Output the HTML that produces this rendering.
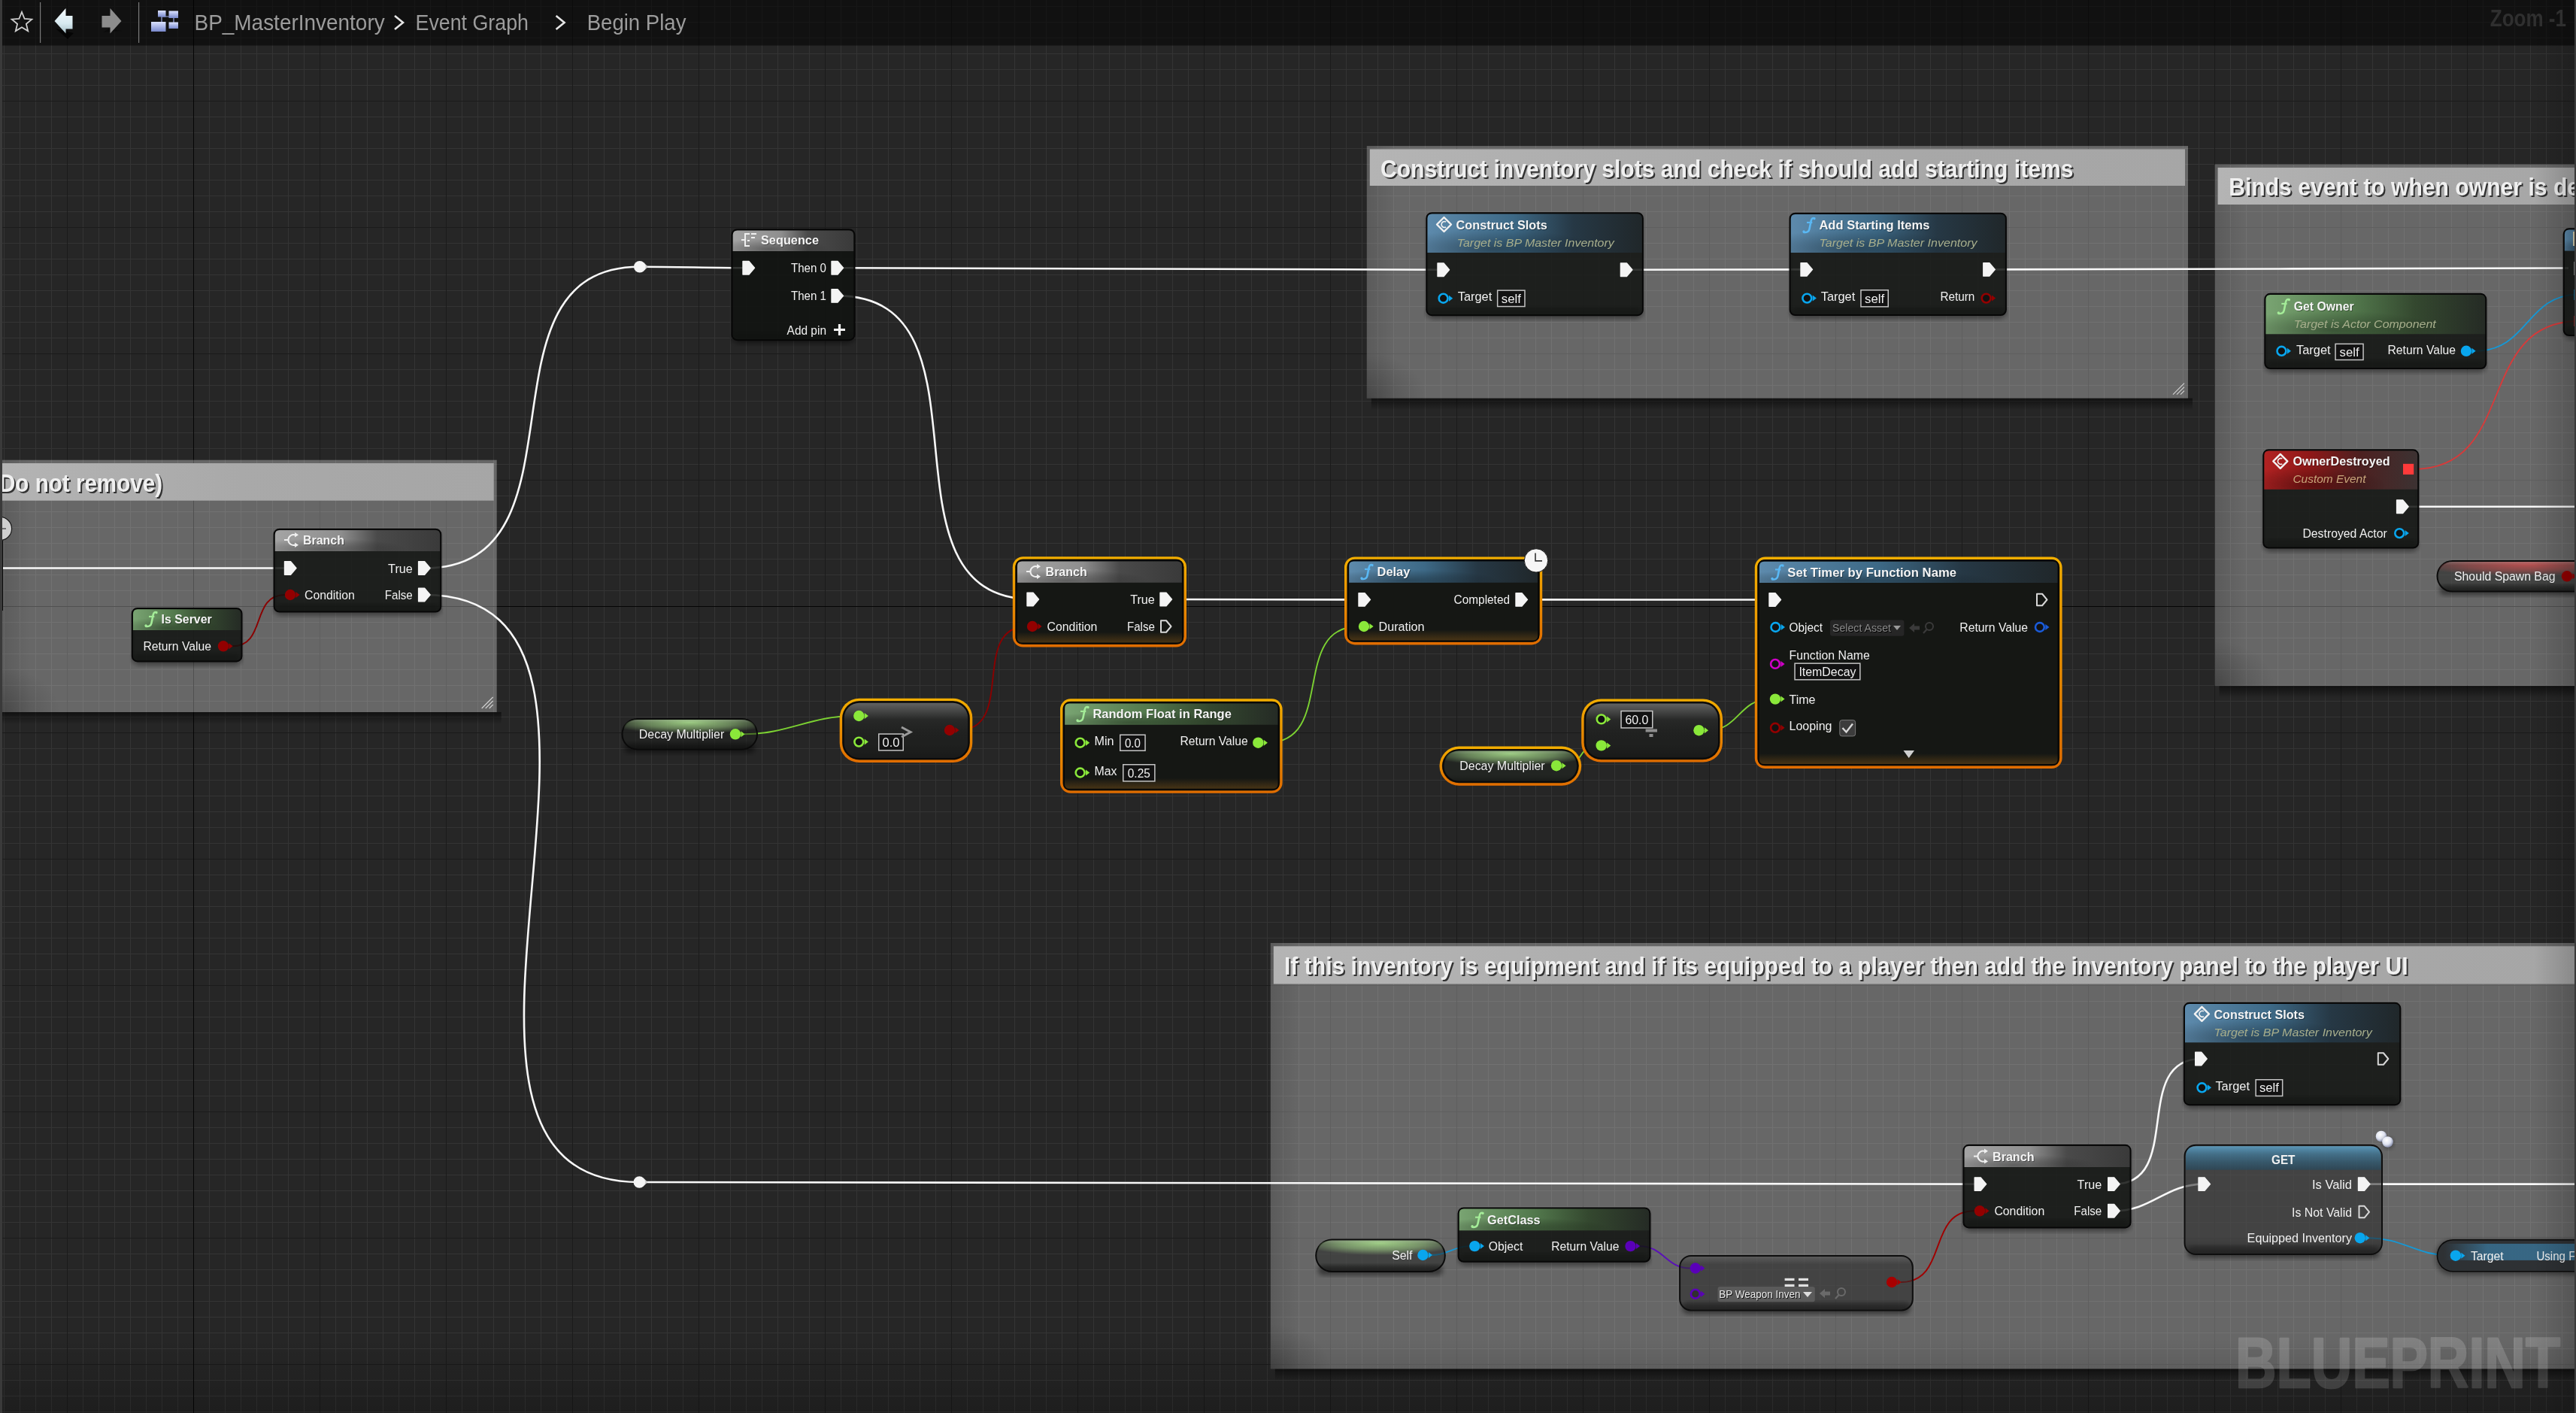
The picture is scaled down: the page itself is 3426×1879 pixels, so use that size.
<!DOCTYPE html>
<html><head><meta charset="utf-8"><style>
html,body{margin:0;padding:0;background:#262626;overflow:hidden;width:3426px;height:1879px}
svg{display:block;will-change:transform}
text{font-family:"Liberation Sans",sans-serif}
</style></head><body>
<svg width="3426" height="1879" viewBox="0 0 3426 1879"><defs><filter id="blur4" x="-10%" y="-10%" width="120%" height="130%"><feGaussianBlur stdDeviation="3"/></filter><linearGradient id="lg1" x1="0" y1="0" x2="0" y2="1"><stop offset="0" stop-color="#000000" stop-opacity="0.55"/><stop offset="1" stop-color="#000000" stop-opacity="0"/></linearGradient><linearGradient id="lg2" x1="0" y1="0" x2="1" y2="0"><stop offset="0" stop-color="#000000" stop-opacity="0.12"/><stop offset="1" stop-color="#000000" stop-opacity="0"/></linearGradient><radialGradient id="rg3" cx="0" cy="1" r="0.5"><stop offset="0" stop-color="#000000" stop-opacity="0.22"/><stop offset="1" stop-color="#000000" stop-opacity="0"/></radialGradient><linearGradient id="lg4" x1="0" y1="0" x2="1" y2="0"><stop offset="0" stop-color="#b4b4b4"/><stop offset="0.5" stop-color="#a9a9a9"/><stop offset="1" stop-color="#a6a6a6"/></linearGradient><linearGradient id="lg5" x1="0" y1="0" x2="0" y2="1"><stop offset="0" stop-color="#000000" stop-opacity="0.55"/><stop offset="1" stop-color="#000000" stop-opacity="0"/></linearGradient><linearGradient id="lg6" x1="0" y1="0" x2="1" y2="0"><stop offset="0" stop-color="#000000" stop-opacity="0.12"/><stop offset="1" stop-color="#000000" stop-opacity="0"/></linearGradient><radialGradient id="rg7" cx="0" cy="1" r="0.5"><stop offset="0" stop-color="#000000" stop-opacity="0.22"/><stop offset="1" stop-color="#000000" stop-opacity="0"/></radialGradient><linearGradient id="lg8" x1="0" y1="0" x2="1" y2="0"><stop offset="0" stop-color="#b4b4b4"/><stop offset="0.5" stop-color="#a9a9a9"/><stop offset="1" stop-color="#a6a6a6"/></linearGradient><linearGradient id="lg9" x1="0" y1="0" x2="0" y2="1"><stop offset="0" stop-color="#000000" stop-opacity="0.55"/><stop offset="1" stop-color="#000000" stop-opacity="0"/></linearGradient><linearGradient id="lg10" x1="0" y1="0" x2="1" y2="0"><stop offset="0" stop-color="#000000" stop-opacity="0.12"/><stop offset="1" stop-color="#000000" stop-opacity="0"/></linearGradient><radialGradient id="rg11" cx="0" cy="1" r="0.5"><stop offset="0" stop-color="#000000" stop-opacity="0.22"/><stop offset="1" stop-color="#000000" stop-opacity="0"/></radialGradient><linearGradient id="lg12" x1="0" y1="0" x2="1" y2="0"><stop offset="0" stop-color="#b4b4b4"/><stop offset="0.5" stop-color="#a9a9a9"/><stop offset="1" stop-color="#a6a6a6"/></linearGradient><linearGradient id="lg13" x1="0" y1="0" x2="0" y2="1"><stop offset="0" stop-color="#000000" stop-opacity="0.55"/><stop offset="1" stop-color="#000000" stop-opacity="0"/></linearGradient><linearGradient id="lg14" x1="0" y1="0" x2="1" y2="0"><stop offset="0" stop-color="#000000" stop-opacity="0.12"/><stop offset="1" stop-color="#000000" stop-opacity="0"/></linearGradient><radialGradient id="rg15" cx="0" cy="1" r="0.5"><stop offset="0" stop-color="#000000" stop-opacity="0.22"/><stop offset="1" stop-color="#000000" stop-opacity="0"/></radialGradient><linearGradient id="lg16" x1="0" y1="0" x2="1" y2="0"><stop offset="0" stop-color="#b4b4b4"/><stop offset="0.5" stop-color="#a9a9a9"/><stop offset="1" stop-color="#a6a6a6"/></linearGradient><linearGradient id="lg17" x1="0" y1="0" x2="1" y2="0"><stop offset="0" stop-color="#a4a4a4"/><stop offset="0.4" stop-color="#8e8e8e"/><stop offset="0.62" stop-color="#4a4a4a"/><stop offset="1" stop-color="#3a3a3a"/></linearGradient><radialGradient id="rg18" cx="0.3" cy="0.9" r="0.5"><stop offset="0" stop-color="#000000" stop-opacity="0.35"/><stop offset="1" stop-color="#000000" stop-opacity="0"/></radialGradient><linearGradient id="lg19" x1="0" y1="0" x2="1" y2="0"><stop offset="0" stop-color="#ffffff" stop-opacity="0.45"/><stop offset="1" stop-color="#ffffff" stop-opacity="0.25"/></linearGradient><linearGradient id="lg20" x1="0" y1="0" x2="1" y2="0"><stop offset="0" stop-color="#79a472"/><stop offset="0.4" stop-color="#52784c"/><stop offset="0.68" stop-color="#34482f"/><stop offset="1" stop-color="#252b25"/></linearGradient><radialGradient id="rg21" cx="0.3" cy="0.9" r="0.5"><stop offset="0" stop-color="#000000" stop-opacity="0.35"/><stop offset="1" stop-color="#000000" stop-opacity="0"/></radialGradient><linearGradient id="lg22" x1="0" y1="0" x2="1" y2="0"><stop offset="0" stop-color="#ffffff" stop-opacity="0.45"/><stop offset="1" stop-color="#ffffff" stop-opacity="0.25"/></linearGradient><linearGradient id="lg23" x1="0" y1="0" x2="1" y2="0"><stop offset="0" stop-color="#a4a4a4"/><stop offset="0.4" stop-color="#8e8e8e"/><stop offset="0.62" stop-color="#4a4a4a"/><stop offset="1" stop-color="#3a3a3a"/></linearGradient><radialGradient id="rg24" cx="0.3" cy="0.9" r="0.5"><stop offset="0" stop-color="#000000" stop-opacity="0.35"/><stop offset="1" stop-color="#000000" stop-opacity="0"/></radialGradient><linearGradient id="lg25" x1="0" y1="0" x2="1" y2="0"><stop offset="0" stop-color="#ffffff" stop-opacity="0.45"/><stop offset="1" stop-color="#ffffff" stop-opacity="0.25"/></linearGradient><linearGradient id="lg26" x1="0" y1="0" x2="0" y2="1"><stop offset="0" stop-color="#f2ae00"/><stop offset="1" stop-color="#e06c00"/></linearGradient><linearGradient id="lg27" x1="0" y1="0" x2="0" y2="1"><stop offset="0" stop-color="#1a1406"/><stop offset="0.7" stop-color="#2a1e0a"/><stop offset="1" stop-color="#3a2408"/></linearGradient><linearGradient id="lg28" x1="0" y1="0" x2="0" y2="1"><stop offset="0" stop-color="#b07018" stop-opacity="0"/><stop offset="1" stop-color="#b07018" stop-opacity="0.32"/></linearGradient><linearGradient id="lg29" x1="0" y1="0" x2="1" y2="0"><stop offset="0" stop-color="#a4a4a4"/><stop offset="0.4" stop-color="#8e8e8e"/><stop offset="0.62" stop-color="#4a4a4a"/><stop offset="1" stop-color="#3a3a3a"/></linearGradient><radialGradient id="rg30" cx="0.3" cy="0.9" r="0.5"><stop offset="0" stop-color="#000000" stop-opacity="0.35"/><stop offset="1" stop-color="#000000" stop-opacity="0"/></radialGradient><linearGradient id="lg31" x1="0" y1="0" x2="1" y2="0"><stop offset="0" stop-color="#ffffff" stop-opacity="0.45"/><stop offset="1" stop-color="#ffffff" stop-opacity="0.25"/></linearGradient><radialGradient id="rg32" cx="0.5" cy="0.15" r="0.62"><stop offset="0" stop-color="#a8dc8c" stop-opacity="0.9"/><stop offset="0.55" stop-color="#a8dc8c" stop-opacity="0.5"/><stop offset="1" stop-color="#a8dc8c" stop-opacity="0"/></radialGradient><linearGradient id="lg33" x1="0" y1="0" x2="0" y2="1"><stop offset="0" stop-color="#ffffff" stop-opacity="0.15"/><stop offset="0.12" stop-color="#ffffff" stop-opacity="0"/><stop offset="0.8" stop-color="#000000" stop-opacity="0"/><stop offset="1" stop-color="#000000" stop-opacity="0.25"/></linearGradient><linearGradient id="lg34" x1="0" y1="0" x2="0" y2="1"><stop offset="0" stop-color="#f2ae00"/><stop offset="1" stop-color="#e06c00"/></linearGradient><linearGradient id="lg35" x1="0" y1="0" x2="0" y2="1"><stop offset="0" stop-color="#ffffff" stop-opacity="0.3"/><stop offset="0.3" stop-color="#ffffff" stop-opacity="0.04"/><stop offset="0.75" stop-color="#000000" stop-opacity="0"/><stop offset="1" stop-color="#000000" stop-opacity="0.2"/></linearGradient><linearGradient id="lg36" x1="0" y1="0" x2="0" y2="1"><stop offset="0" stop-color="#f2ae00"/><stop offset="1" stop-color="#e06c00"/></linearGradient><linearGradient id="lg37" x1="0" y1="0" x2="0" y2="1"><stop offset="0" stop-color="#1a1406"/><stop offset="0.7" stop-color="#2a1e0a"/><stop offset="1" stop-color="#3a2408"/></linearGradient><linearGradient id="lg38" x1="0" y1="0" x2="0" y2="1"><stop offset="0" stop-color="#b07018" stop-opacity="0"/><stop offset="1" stop-color="#b07018" stop-opacity="0.32"/></linearGradient><linearGradient id="lg39" x1="0" y1="0" x2="1" y2="0"><stop offset="0" stop-color="#79a472"/><stop offset="0.4" stop-color="#52784c"/><stop offset="0.68" stop-color="#34482f"/><stop offset="1" stop-color="#252b25"/></linearGradient><radialGradient id="rg40" cx="0.3" cy="0.9" r="0.5"><stop offset="0" stop-color="#000000" stop-opacity="0.35"/><stop offset="1" stop-color="#000000" stop-opacity="0"/></radialGradient><linearGradient id="lg41" x1="0" y1="0" x2="1" y2="0"><stop offset="0" stop-color="#ffffff" stop-opacity="0.45"/><stop offset="1" stop-color="#ffffff" stop-opacity="0.25"/></linearGradient><linearGradient id="lg42" x1="0" y1="0" x2="0" y2="1"><stop offset="0" stop-color="#f2ae00"/><stop offset="1" stop-color="#e06c00"/></linearGradient><linearGradient id="lg43" x1="0" y1="0" x2="0" y2="1"><stop offset="0" stop-color="#1a1406"/><stop offset="0.7" stop-color="#2a1e0a"/><stop offset="1" stop-color="#3a2408"/></linearGradient><linearGradient id="lg44" x1="0" y1="0" x2="0" y2="1"><stop offset="0" stop-color="#b07018" stop-opacity="0"/><stop offset="1" stop-color="#b07018" stop-opacity="0.32"/></linearGradient><linearGradient id="lg45" x1="0" y1="0" x2="1" y2="0"><stop offset="0" stop-color="#5d8aac"/><stop offset="0.4" stop-color="#3d6986"/><stop offset="0.68" stop-color="#263845"/><stop offset="1" stop-color="#20272a"/></linearGradient><radialGradient id="rg46" cx="0.3" cy="0.9" r="0.5"><stop offset="0" stop-color="#000000" stop-opacity="0.35"/><stop offset="1" stop-color="#000000" stop-opacity="0"/></radialGradient><linearGradient id="lg47" x1="0" y1="0" x2="1" y2="0"><stop offset="0" stop-color="#ffffff" stop-opacity="0.45"/><stop offset="1" stop-color="#ffffff" stop-opacity="0.25"/></linearGradient><linearGradient id="lg48" x1="0" y1="0" x2="0" y2="1"><stop offset="0" stop-color="#f2ae00"/><stop offset="1" stop-color="#e06c00"/></linearGradient><linearGradient id="lg49" x1="0" y1="0" x2="0" y2="1"><stop offset="0" stop-color="#1a1406"/><stop offset="0.7" stop-color="#2a1e0a"/><stop offset="1" stop-color="#3a2408"/></linearGradient><linearGradient id="lg50" x1="0" y1="0" x2="0" y2="1"><stop offset="0" stop-color="#b07018" stop-opacity="0"/><stop offset="1" stop-color="#b07018" stop-opacity="0.32"/></linearGradient><linearGradient id="lg51" x1="0" y1="0" x2="1" y2="0"><stop offset="0" stop-color="#5d8aac"/><stop offset="0.4" stop-color="#3d6986"/><stop offset="0.68" stop-color="#263845"/><stop offset="1" stop-color="#20272a"/></linearGradient><radialGradient id="rg52" cx="0.3" cy="0.9" r="0.5"><stop offset="0" stop-color="#000000" stop-opacity="0.35"/><stop offset="1" stop-color="#000000" stop-opacity="0"/></radialGradient><linearGradient id="lg53" x1="0" y1="0" x2="1" y2="0"><stop offset="0" stop-color="#ffffff" stop-opacity="0.45"/><stop offset="1" stop-color="#ffffff" stop-opacity="0.25"/></linearGradient><linearGradient id="lg54" x1="0" y1="0" x2="0" y2="1"><stop offset="0" stop-color="#f2ae00"/><stop offset="1" stop-color="#e06c00"/></linearGradient><radialGradient id="rg55" cx="0.5" cy="0.15" r="0.62"><stop offset="0" stop-color="#a8dc8c" stop-opacity="0.9"/><stop offset="0.55" stop-color="#a8dc8c" stop-opacity="0.5"/><stop offset="1" stop-color="#a8dc8c" stop-opacity="0"/></radialGradient><linearGradient id="lg56" x1="0" y1="0" x2="0" y2="1"><stop offset="0" stop-color="#ffffff" stop-opacity="0.15"/><stop offset="0.12" stop-color="#ffffff" stop-opacity="0"/><stop offset="0.8" stop-color="#000000" stop-opacity="0"/><stop offset="1" stop-color="#000000" stop-opacity="0.25"/></linearGradient><linearGradient id="lg57" x1="0" y1="0" x2="0" y2="1"><stop offset="0" stop-color="#f2ae00"/><stop offset="1" stop-color="#e06c00"/></linearGradient><linearGradient id="lg58" x1="0" y1="0" x2="0" y2="1"><stop offset="0" stop-color="#ffffff" stop-opacity="0.3"/><stop offset="0.3" stop-color="#ffffff" stop-opacity="0.04"/><stop offset="0.75" stop-color="#000000" stop-opacity="0"/><stop offset="1" stop-color="#000000" stop-opacity="0.2"/></linearGradient><linearGradient id="lg59" x1="0" y1="0" x2="1" y2="0"><stop offset="0" stop-color="#5d8aac"/><stop offset="0.4" stop-color="#3d6986"/><stop offset="0.68" stop-color="#263845"/><stop offset="1" stop-color="#20272a"/></linearGradient><radialGradient id="rg60" cx="0.3" cy="0.9" r="0.5"><stop offset="0" stop-color="#000000" stop-opacity="0.35"/><stop offset="1" stop-color="#000000" stop-opacity="0"/></radialGradient><linearGradient id="lg61" x1="0" y1="0" x2="1" y2="0"><stop offset="0" stop-color="#ffffff" stop-opacity="0.45"/><stop offset="1" stop-color="#ffffff" stop-opacity="0.25"/></linearGradient><linearGradient id="lg62" x1="0" y1="0" x2="1" y2="0"><stop offset="0" stop-color="#5d8aac"/><stop offset="0.4" stop-color="#3d6986"/><stop offset="0.68" stop-color="#263845"/><stop offset="1" stop-color="#20272a"/></linearGradient><radialGradient id="rg63" cx="0.3" cy="0.9" r="0.5"><stop offset="0" stop-color="#000000" stop-opacity="0.35"/><stop offset="1" stop-color="#000000" stop-opacity="0"/></radialGradient><linearGradient id="lg64" x1="0" y1="0" x2="1" y2="0"><stop offset="0" stop-color="#ffffff" stop-opacity="0.45"/><stop offset="1" stop-color="#ffffff" stop-opacity="0.25"/></linearGradient><linearGradient id="lg65" x1="0" y1="0" x2="1" y2="0"><stop offset="0" stop-color="#79a472"/><stop offset="0.4" stop-color="#52784c"/><stop offset="0.68" stop-color="#34482f"/><stop offset="1" stop-color="#252b25"/></linearGradient><radialGradient id="rg66" cx="0.3" cy="0.9" r="0.5"><stop offset="0" stop-color="#000000" stop-opacity="0.35"/><stop offset="1" stop-color="#000000" stop-opacity="0"/></radialGradient><linearGradient id="lg67" x1="0" y1="0" x2="1" y2="0"><stop offset="0" stop-color="#ffffff" stop-opacity="0.45"/><stop offset="1" stop-color="#ffffff" stop-opacity="0.25"/></linearGradient><linearGradient id="lg68" x1="0" y1="0" x2="1" y2="0"><stop offset="0" stop-color="#5d8aac"/><stop offset="0.4" stop-color="#3d6986"/><stop offset="0.68" stop-color="#263845"/><stop offset="1" stop-color="#20272a"/></linearGradient><radialGradient id="rg69" cx="0.3" cy="0.9" r="0.5"><stop offset="0" stop-color="#000000" stop-opacity="0.35"/><stop offset="1" stop-color="#000000" stop-opacity="0"/></radialGradient><linearGradient id="lg70" x1="0" y1="0" x2="1" y2="0"><stop offset="0" stop-color="#ffffff" stop-opacity="0.45"/><stop offset="1" stop-color="#ffffff" stop-opacity="0.25"/></linearGradient><linearGradient id="lg71" x1="0" y1="0" x2="1" y2="0"><stop offset="0" stop-color="#b22222"/><stop offset="0.3" stop-color="#8e1818"/><stop offset="0.62" stop-color="#4d2020"/><stop offset="1" stop-color="#3c3232"/></linearGradient><radialGradient id="rg72" cx="0.3" cy="0.9" r="0.5"><stop offset="0" stop-color="#000000" stop-opacity="0.35"/><stop offset="1" stop-color="#000000" stop-opacity="0"/></radialGradient><linearGradient id="lg73" x1="0" y1="0" x2="1" y2="0"><stop offset="0" stop-color="#ffffff" stop-opacity="0.45"/><stop offset="1" stop-color="#ffffff" stop-opacity="0.25"/></linearGradient><radialGradient id="rg74" cx="0.5" cy="0.15" r="0.62"><stop offset="0" stop-color="#c05050" stop-opacity="0.9"/><stop offset="0.55" stop-color="#c05050" stop-opacity="0.5"/><stop offset="1" stop-color="#c05050" stop-opacity="0"/></radialGradient><linearGradient id="lg75" x1="0" y1="0" x2="0" y2="1"><stop offset="0" stop-color="#ffffff" stop-opacity="0.15"/><stop offset="0.12" stop-color="#ffffff" stop-opacity="0"/><stop offset="0.8" stop-color="#000000" stop-opacity="0"/><stop offset="1" stop-color="#000000" stop-opacity="0.25"/></linearGradient><linearGradient id="lg76" x1="0" y1="0" x2="1" y2="0"><stop offset="0" stop-color="#5d8aac"/><stop offset="0.4" stop-color="#3d6986"/><stop offset="0.68" stop-color="#263845"/><stop offset="1" stop-color="#20272a"/></linearGradient><radialGradient id="rg77" cx="0.3" cy="0.9" r="0.5"><stop offset="0" stop-color="#000000" stop-opacity="0.35"/><stop offset="1" stop-color="#000000" stop-opacity="0"/></radialGradient><linearGradient id="lg78" x1="0" y1="0" x2="1" y2="0"><stop offset="0" stop-color="#ffffff" stop-opacity="0.45"/><stop offset="1" stop-color="#ffffff" stop-opacity="0.25"/></linearGradient><linearGradient id="lg79" x1="0" y1="0" x2="1" y2="0"><stop offset="0" stop-color="#a4a4a4"/><stop offset="0.4" stop-color="#8e8e8e"/><stop offset="0.62" stop-color="#4a4a4a"/><stop offset="1" stop-color="#3a3a3a"/></linearGradient><radialGradient id="rg80" cx="0.3" cy="0.9" r="0.5"><stop offset="0" stop-color="#000000" stop-opacity="0.35"/><stop offset="1" stop-color="#000000" stop-opacity="0"/></radialGradient><linearGradient id="lg81" x1="0" y1="0" x2="1" y2="0"><stop offset="0" stop-color="#ffffff" stop-opacity="0.45"/><stop offset="1" stop-color="#ffffff" stop-opacity="0.25"/></linearGradient><linearGradient id="lg82" x1="0" y1="0" x2="0" y2="1"><stop offset="0" stop-color="#ffffff" stop-opacity="0.12"/><stop offset="0.15" stop-color="#ffffff" stop-opacity="0"/><stop offset="0.85" stop-color="#000000" stop-opacity="0"/><stop offset="1" stop-color="#000000" stop-opacity="0.25"/></linearGradient><linearGradient id="lg83" x1="0" y1="0" x2="0" y2="1"><stop offset="0" stop-color="#5ab0e0" stop-opacity="0.7"/><stop offset="0.35" stop-color="#3a88b4" stop-opacity="0.55"/><stop offset="1" stop-color="#1c4a66" stop-opacity="0.5"/></linearGradient><linearGradient id="lg84" x1="0" y1="0" x2="1" y2="0"><stop offset="0" stop-color="#ffffff" stop-opacity="0"/><stop offset="0.2" stop-color="#ffffff" stop-opacity="0.5"/><stop offset="0.8" stop-color="#ffffff" stop-opacity="0.5"/><stop offset="1" stop-color="#ffffff" stop-opacity="0"/></linearGradient><radialGradient id="rg85" cx="0.4" cy="0.35" r="0.65"><stop offset="0" stop-color="#ffffff"/><stop offset="0.6" stop-color="#dfe3f0"/><stop offset="1" stop-color="#8a92b0"/></radialGradient><linearGradient id="lg86" x1="0" y1="0" x2="1" y2="0"><stop offset="0" stop-color="#3d8ab8" stop-opacity="0"/><stop offset="0.25" stop-color="#3d8ab8" stop-opacity="0.6"/><stop offset="1" stop-color="#3d8ab8" stop-opacity="0.6"/></linearGradient><radialGradient id="rg87" cx="0.5" cy="0.15" r="0.62"><stop offset="0" stop-color="#a8dc8c" stop-opacity="0.9"/><stop offset="0.55" stop-color="#a8dc8c" stop-opacity="0.5"/><stop offset="1" stop-color="#a8dc8c" stop-opacity="0"/></radialGradient><linearGradient id="lg88" x1="0" y1="0" x2="0" y2="1"><stop offset="0" stop-color="#ffffff" stop-opacity="0.15"/><stop offset="0.12" stop-color="#ffffff" stop-opacity="0"/><stop offset="0.8" stop-color="#000000" stop-opacity="0"/><stop offset="1" stop-color="#000000" stop-opacity="0.25"/></linearGradient><linearGradient id="lg89" x1="0" y1="0" x2="1" y2="0"><stop offset="0" stop-color="#79a472"/><stop offset="0.4" stop-color="#52784c"/><stop offset="0.68" stop-color="#34482f"/><stop offset="1" stop-color="#252b25"/></linearGradient><radialGradient id="rg90" cx="0.3" cy="0.9" r="0.5"><stop offset="0" stop-color="#000000" stop-opacity="0.35"/><stop offset="1" stop-color="#000000" stop-opacity="0"/></radialGradient><linearGradient id="lg91" x1="0" y1="0" x2="1" y2="0"><stop offset="0" stop-color="#ffffff" stop-opacity="0.45"/><stop offset="1" stop-color="#ffffff" stop-opacity="0.25"/></linearGradient><linearGradient id="lg92" x1="0" y1="0" x2="0" y2="1"><stop offset="0" stop-color="#ffffff" stop-opacity="0.12"/><stop offset="0.15" stop-color="#ffffff" stop-opacity="0"/><stop offset="0.85" stop-color="#000000" stop-opacity="0"/><stop offset="1" stop-color="#000000" stop-opacity="0.25"/></linearGradient><linearGradient id="lg93" x1="0" y1="0" x2="0" y2="1"><stop offset="0" stop-color="#000000" stop-opacity="0"/><stop offset="1" stop-color="#000000" stop-opacity="0.22"/></linearGradient><linearGradient id="lg94" x1="0" y1="0" x2="1" y2="0"><stop offset="0" stop-color="#000000" stop-opacity="0"/><stop offset="1" stop-color="#000000" stop-opacity="0.18"/></linearGradient><linearGradient id="lg95" x1="0" y1="0" x2="0" y2="1"><stop offset="0" stop-color="#f4fbff"/><stop offset="0.6" stop-color="#d8eaf0"/><stop offset="1" stop-color="#a8c0c8"/></linearGradient><linearGradient id="lg96" x1="0" y1="0" x2="0" y2="1"><stop offset="0" stop-color="#dbe2ff"/><stop offset="1" stop-color="#7888cc"/></linearGradient></defs><rect x="0" y="0" width="3426" height="1879" fill="#262626"/>
<path d="M5.5 0V1879M26.5 0V1879M47.5 0V1879M68.5 0V1879M110.5 0V1879M131.5 0V1879M152.5 0V1879M173.5 0V1879M194.5 0V1879M215.5 0V1879M236.5 0V1879M278.5 0V1879M299.5 0V1879M320.5 0V1879M341.5 0V1879M362.5 0V1879M383.5 0V1879M404.5 0V1879M446.5 0V1879M467.5 0V1879M488.5 0V1879M509.5 0V1879M530.5 0V1879M551.5 0V1879M572.5 0V1879M614.5 0V1879M635.5 0V1879M656.5 0V1879M677.5 0V1879M698.5 0V1879M719.5 0V1879M740.5 0V1879M782.5 0V1879M803.5 0V1879M824.5 0V1879M845.5 0V1879M866.5 0V1879M887.5 0V1879M908.5 0V1879M950.5 0V1879M971.5 0V1879M992.5 0V1879M1013.5 0V1879M1034.5 0V1879M1055.5 0V1879M1076.5 0V1879M1118.5 0V1879M1139.5 0V1879M1160.5 0V1879M1181.5 0V1879M1202.5 0V1879M1223.5 0V1879M1244.5 0V1879M1286.5 0V1879M1307.5 0V1879M1328.5 0V1879M1349.5 0V1879M1370.5 0V1879M1391.5 0V1879M1412.5 0V1879M1454.5 0V1879M1475.5 0V1879M1496.5 0V1879M1517.5 0V1879M1538.5 0V1879M1559.5 0V1879M1580.5 0V1879M1622.5 0V1879M1643.5 0V1879M1664.5 0V1879M1685.5 0V1879M1706.5 0V1879M1727.5 0V1879M1748.5 0V1879M1790.5 0V1879M1811.5 0V1879M1832.5 0V1879M1853.5 0V1879M1874.5 0V1879M1895.5 0V1879M1916.5 0V1879M1958.5 0V1879M1979.5 0V1879M2000.5 0V1879M2021.5 0V1879M2042.5 0V1879M2063.5 0V1879M2084.5 0V1879M2126.5 0V1879M2147.5 0V1879M2168.5 0V1879M2189.5 0V1879M2210.5 0V1879M2231.5 0V1879M2252.5 0V1879M2294.5 0V1879M2315.5 0V1879M2336.5 0V1879M2357.5 0V1879M2378.5 0V1879M2399.5 0V1879M2420.5 0V1879M2462.5 0V1879M2483.5 0V1879M2504.5 0V1879M2525.5 0V1879M2546.5 0V1879M2567.5 0V1879M2588.5 0V1879M2630.5 0V1879M2651.5 0V1879M2672.5 0V1879M2693.5 0V1879M2714.5 0V1879M2735.5 0V1879M2756.5 0V1879M2798.5 0V1879M2819.5 0V1879M2840.5 0V1879M2861.5 0V1879M2882.5 0V1879M2903.5 0V1879M2924.5 0V1879M2966.5 0V1879M2987.5 0V1879M3008.5 0V1879M3029.5 0V1879M3050.5 0V1879M3071.5 0V1879M3092.5 0V1879M3134.5 0V1879M3155.5 0V1879M3176.5 0V1879M3197.5 0V1879M3218.5 0V1879M3239.5 0V1879M3260.5 0V1879M3302.5 0V1879M3323.5 0V1879M3344.5 0V1879M3365.5 0V1879M3386.5 0V1879M3407.5 0V1879M0 8.5H3426M0 29.5H3426M0 50.5H3426M0 71.5H3426M0 92.5H3426M0 113.5H3426M0 155.5H3426M0 176.5H3426M0 197.5H3426M0 218.5H3426M0 239.5H3426M0 260.5H3426M0 281.5H3426M0 323.5H3426M0 344.5H3426M0 365.5H3426M0 386.5H3426M0 407.5H3426M0 428.5H3426M0 449.5H3426M0 491.5H3426M0 512.5H3426M0 533.5H3426M0 554.5H3426M0 575.5H3426M0 596.5H3426M0 617.5H3426M0 659.5H3426M0 680.5H3426M0 701.5H3426M0 722.5H3426M0 743.5H3426M0 764.5H3426M0 785.5H3426M0 827.5H3426M0 848.5H3426M0 869.5H3426M0 890.5H3426M0 911.5H3426M0 932.5H3426M0 953.5H3426M0 995.5H3426M0 1016.5H3426M0 1037.5H3426M0 1058.5H3426M0 1079.5H3426M0 1100.5H3426M0 1121.5H3426M0 1163.5H3426M0 1184.5H3426M0 1205.5H3426M0 1226.5H3426M0 1247.5H3426M0 1268.5H3426M0 1289.5H3426M0 1331.5H3426M0 1352.5H3426M0 1373.5H3426M0 1394.5H3426M0 1415.5H3426M0 1436.5H3426M0 1457.5H3426M0 1499.5H3426M0 1520.5H3426M0 1541.5H3426M0 1562.5H3426M0 1583.5H3426M0 1604.5H3426M0 1625.5H3426M0 1667.5H3426M0 1688.5H3426M0 1709.5H3426M0 1730.5H3426M0 1751.5H3426M0 1772.5H3426M0 1793.5H3426M0 1835.5H3426M0 1856.5H3426M0 1877.5H3426" stroke="#343434" stroke-width="1" shape-rendering="crispEdges"/>
<path d="M89.5 0V1879M425.5 0V1879M593.5 0V1879M761.5 0V1879M929.5 0V1879M1097.5 0V1879M1265.5 0V1879M1433.5 0V1879M1601.5 0V1879M1769.5 0V1879M1937.5 0V1879M2105.5 0V1879M2273.5 0V1879M2441.5 0V1879M2609.5 0V1879M2777.5 0V1879M2945.5 0V1879M3113.5 0V1879M3281.5 0V1879M0 134.5H3426M0 302.5H3426M0 470.5H3426M0 638.5H3426M0 974.5H3426M0 1142.5H3426M0 1310.5H3426M0 1478.5H3426M0 1646.5H3426M0 1814.5H3426" stroke="#1b1b1b" stroke-width="1" shape-rendering="crispEdges"/>
<path d="M257.5 0V1879M0 806.5H3426" stroke="#050505" stroke-width="1.3" shape-rendering="crispEdges"/>
<rect x="-14" y="947" width="680.7" height="16" fill="url(#lg1)"/>
<rect x="-20" y="611.7" width="680.7" height="335.3" fill="rgba(255,255,255,0.30)"/>
<rect x="0" y="611.7" width="40" height="335.3" fill="url(#lg2)"/>
<rect x="0" y="827" width="160" height="120" fill="url(#rg3)"/>
<rect x="-16" y="616" width="672.7" height="49.7" fill="url(#lg4)"/>
<text x="1" y="655.85" font-family="Liberation Sans" font-size="33.5" font-weight="bold" textLength="217" lengthAdjust="spacingAndGlyphs" fill="rgba(35,35,35,0.9)">Do not remove)</text>
<text x="-1" y="653.85" font-family="Liberation Sans" font-size="33.5" font-weight="bold" textLength="217" lengthAdjust="spacingAndGlyphs" fill="#f0f0f0">Do not remove)</text>
<path d="M650.7 942L655.7 937" stroke="#e8e8e8" stroke-width="1.2" opacity="0.8"/>
<path d="M645.7 942L655.7 932" stroke="#e8e8e8" stroke-width="1.2" opacity="0.8"/>
<path d="M640.7 942L655.7 927" stroke="#e8e8e8" stroke-width="1.2" opacity="0.8"/>
<rect x="1823.8" y="529.6" width="1092.2" height="16" fill="url(#lg5)"/>
<rect x="1817.8" y="194.1" width="1092.2" height="335.5" fill="rgba(255,255,255,0.30)"/>
<rect x="1817.8" y="194.1" width="40" height="335.5" fill="url(#lg6)"/>
<rect x="1817.8" y="409.6" width="160" height="120" fill="url(#rg7)"/>
<rect x="1821.8" y="198.4" width="1084.2" height="48.6" fill="url(#lg8)"/>
<text x="1837.9" y="237.7" font-family="Liberation Sans" font-size="33.5" font-weight="bold" textLength="921.6" lengthAdjust="spacingAndGlyphs" fill="rgba(35,35,35,0.9)">Construct inventory slots and check if should add starting items</text>
<text x="1835.9" y="235.7" font-family="Liberation Sans" font-size="33.5" font-weight="bold" textLength="921.6" lengthAdjust="spacingAndGlyphs" fill="#f0f0f0">Construct inventory slots and check if should add starting items</text>
<path d="M2900 524.6L2905 519.6" stroke="#e8e8e8" stroke-width="1.2" opacity="0.8"/>
<path d="M2895 524.6L2905 514.6" stroke="#e8e8e8" stroke-width="1.2" opacity="0.8"/>
<path d="M2890 524.6L2905 509.6" stroke="#e8e8e8" stroke-width="1.2" opacity="0.8"/>
<rect x="2951.6" y="912.1" width="514.4" height="16" fill="url(#lg9)"/>
<rect x="2945.6" y="218.6" width="514.4" height="693.5" fill="rgba(255,255,255,0.30)"/>
<rect x="2945.6" y="218.6" width="40" height="693.5" fill="url(#lg10)"/>
<rect x="2945.6" y="792.1" width="160" height="120" fill="url(#rg11)"/>
<rect x="2949.6" y="222.9" width="506.4" height="49.1" fill="url(#lg12)"/>
<text x="2966.2" y="262.45" font-family="Liberation Sans" font-size="33.5" font-weight="bold" textLength="575.63" lengthAdjust="spacingAndGlyphs" fill="rgba(35,35,35,0.9)">Binds event to when owner is destroyed</text>
<text x="2964.2" y="260.45" font-family="Liberation Sans" font-size="33.5" font-weight="bold" textLength="575.63" lengthAdjust="spacingAndGlyphs" fill="#f0f0f0">Binds event to when owner is destroyed</text>
<rect x="1695.8" y="1820.3" width="1770.2" height="16" fill="url(#lg13)"/>
<rect x="1689.8" y="1254" width="1770.2" height="566.3" fill="rgba(255,255,255,0.30)"/>
<rect x="1689.8" y="1254" width="40" height="566.3" fill="url(#lg14)"/>
<rect x="1689.8" y="1700.3" width="160" height="120" fill="url(#rg15)"/>
<rect x="1693.8" y="1258.3" width="1762.2" height="50.2" fill="url(#lg16)"/>
<text x="1710" y="1298.4" font-family="Liberation Sans" font-size="33.5" font-weight="bold" textLength="1494.5" lengthAdjust="spacingAndGlyphs" fill="rgba(35,35,35,0.9)">If this inventory is equipment and if its equipped to a player then add the inventory panel to the player UI</text>
<text x="1708" y="1296.4" font-family="Liberation Sans" font-size="33.5" font-weight="bold" textLength="1494.5" lengthAdjust="spacingAndGlyphs" fill="#f0f0f0">If this inventory is equipment and if its equipped to a player then add the inventory panel to the player UI</text>
<path d="M4 755.5H386" stroke="#f8f8f8" stroke-width="2.6"/>
<path d="M564.3 755.5 C793.4 755.5 621.7 354.7 850.8 354.7" fill="none" stroke="#f8f8f8" stroke-width="2.6"/>
<path d="M850.8 354.7 C899.73 354.7 947.07 356.3 996 356.3" fill="none" stroke="#f8f8f8" stroke-width="2.6"/>
<path d="M564.3 791 C919.97 791 494.63 1572 850.3 1572" fill="none" stroke="#f8f8f8" stroke-width="2.6"/>
<path d="M850.3 1572 C1445.73 1572 2038.57 1574.6 2634 1574.6" fill="none" stroke="#f8f8f8" stroke-width="2.6"/>
<path d="M1114 356.3 C1383.47 356.3 1650.53 358.7 1920 358.7" fill="none" stroke="#f8f8f8" stroke-width="2.6"/>
<path d="M2162.8 358.7 C2242.97 358.7 2322.83 358.4 2403 358.4" fill="none" stroke="#f8f8f8" stroke-width="2.6"/>
<path d="M2645.4 358.4 C2902.9 358.4 3158.5 356.5 3416 356.5" fill="none" stroke="#f8f8f8" stroke-width="2.6"/>
<path d="M1114 393.4 C1335.2 393.4 1152.8 797 1374 797" fill="none" stroke="#f8f8f8" stroke-width="2.6"/>
<path d="M1551 797 C1639.13 797 1726.87 797.4 1815 797.4" fill="none" stroke="#f8f8f8" stroke-width="2.6"/>
<path d="M2024 797.4 C2136.37 797.4 2248.63 797.5 2361 797.5" fill="none" stroke="#f8f8f8" stroke-width="2.6"/>
<path d="M3194.6 673.7 C3273.07 673.7 3351.53 673.7 3430 673.7" fill="none" stroke="#f8f8f8" stroke-width="2.6"/>
<path d="M2811.2 1574.6 C2905.57 1574.6 2833.33 1408 2927.7 1408" fill="none" stroke="#f8f8f8" stroke-width="2.6"/>
<path d="M2811.2 1610.3 C2863.03 1610.3 2879.17 1574.6 2931 1574.6" fill="none" stroke="#f8f8f8" stroke-width="2.6"/>
<path d="M3144 1574.6 C3239.33 1574.6 3334.67 1574.6 3430 1574.6" fill="none" stroke="#f8f8f8" stroke-width="2.6"/>
<path d="M309 859.3 C355.1 859.3 332.9 791 379 791" fill="none" stroke="#8a0000" stroke-width="1.9"/>
<path d="M990 976.3 C1046.53 976.3 1078.77 952 1135.3 952" fill="none" stroke="#7cd232" stroke-width="1.9"/>
<path d="M1275 971 C1351.33 971 1289.67 833 1366 833" fill="none" stroke="#8a0000" stroke-width="1.9"/>
<path d="M1685.3 987.7 C1777.43 987.7 1714.87 833 1807 833" fill="none" stroke="#7cd232" stroke-width="1.9"/>
<path d="M2082 1018.2 C2104.5 1018.2 2100.2 991.4 2122.7 991.4" fill="none" stroke="#7cd232" stroke-width="1.9"/>
<path d="M2271.5 971.2 C2312.87 971.2 2312.63 929.6 2354 929.6" fill="none" stroke="#7cd232" stroke-width="1.9"/>
<path d="M3292 466.8 C3363.1 466.8 3358.9 391.5 3430 391.5" fill="none" stroke="#1598d6" stroke-width="1.9"/>
<path d="M3210 624 C3349 624 3291 427 3430 427" fill="none" stroke="#d83a3a" stroke-width="1.9"/>
<path d="M3150.8 1646.2 C3194.67 1646.2 3215.03 1669.7 3258.9 1669.7" fill="none" stroke="#1598d6" stroke-width="1.9"/>
<path d="M1904.4 1669 C1925 1669 1933.7 1657.1 1954.3 1657.1" fill="none" stroke="#1598d6" stroke-width="1.9"/>
<path d="M2180.5 1657.1 C2212.73 1657.1 2215.57 1686.5 2247.8 1686.5" fill="none" stroke="#5a10b8" stroke-width="1.9"/>
<path d="M2528.1 1705 C2592.3 1705 2561.8 1610.3 2626 1610.3" fill="none" stroke="#a00000" stroke-width="1.9"/>
<rect x="2.5" y="719" width="1.5" height="93" fill="#0a0a0a"/>
<circle cx="0" cy="703" r="15.6" fill="#cfcfcf" stroke="#1a1a1a" stroke-width="1.2"/>
<path d="M3 703H8" stroke="#333" stroke-width="1.2"/>
<rect x="365.6" y="802.6" width="219.7" height="16" rx="8" fill="rgba(0,0,0,0.4)" filter="url(#blur4)"/>
<rect x="362.6" y="708.7" width="5" height="105.9" fill="rgba(0,0,0,0.2)" filter="url(#blur4)"/>
<rect x="583.3" y="708.7" width="5" height="105.9" fill="rgba(0,0,0,0.2)" filter="url(#blur4)"/>
<rect x="364.6" y="703.7" width="221.7" height="109.9" rx="7" fill="rgba(17,19,17,0.85)" stroke="#070707" stroke-width="2"/>
<path d="M365.8 733 V710.9 Q365.8 704.9 371.8 704.9 H579.1 Q585.1 704.9 585.1 710.9 V733 Z" fill="url(#lg17)"/>
<path d="M365.8 733 V710.9 Q365.8 704.9 371.8 704.9 H579.1 Q585.1 704.9 585.1 710.9 V733 Z" fill="url(#rg18)"/>
<path d="M371.6 705.7 H579.3" stroke="url(#lg19)" stroke-width="1.2"/>
<path d="M393 711.5 A7 7 0 1 0 393 724.5" fill="none" stroke="#f0f0f0" stroke-width="2"/>
<path d="M378 718H383" stroke="#f0f0f0" stroke-width="2"/>
<path d="M392 708 L397 711.2 L392 714.5 Z" fill="#f0f0f0"/>
<path d="M392 728 L397 724.8 L392 721.5 Z" fill="#f0f0f0"/>
<text x="404" y="725.2" font-family="Liberation Sans" font-size="17.3" font-weight="bold" textLength="55" lengthAdjust="spacingAndGlyphs" fill="rgba(0,0,0,0.35)">Branch</text>
<text x="403" y="724.2" font-family="Liberation Sans" font-size="17.3" font-weight="bold" textLength="55" lengthAdjust="spacingAndGlyphs" fill="#f4f4f4">Branch</text>
<path d="M378.5 746.75 L386.56 746.75 L394 755.5 L386.56 764.25 L378.5 764.25 Z" fill="#f4f4f4" stroke="#f4f4f4" stroke-width="1.4" stroke-linejoin="round"/>
<text x="516.1" y="761.5" font-family="Liberation Sans" font-size="16.8" textLength="32.7" lengthAdjust="spacingAndGlyphs" fill="#f0f0f0">True</text>
<path d="M556.6 746.75 L564.66 746.75 L572.1 755.5 L564.66 764.25 L556.6 764.25 Z" fill="#f4f4f4" stroke="#f4f4f4" stroke-width="1.4" stroke-linejoin="round"/>
<path d="M393.4 787 L398.6 791 L393.4 795 Z" fill="#930000"/>
<circle cx="386" cy="791" r="7.2" fill="#930000"/>
<text x="405" y="797" font-family="Liberation Sans" font-size="16.8" textLength="66.8" lengthAdjust="spacingAndGlyphs" fill="#f0f0f0">Condition</text>
<text x="511.8" y="797" font-family="Liberation Sans" font-size="16.8" textLength="37" lengthAdjust="spacingAndGlyphs" fill="#f0f0f0">False</text>
<path d="M556.6 782.25 L564.66 782.25 L572.1 791 L564.66 799.75 L556.6 799.75 Z" fill="#f4f4f4" stroke="#f4f4f4" stroke-width="1.4" stroke-linejoin="round"/>
<rect x="176.8" y="868.4" width="143.7" height="16" rx="8" fill="rgba(0,0,0,0.4)" filter="url(#blur4)"/>
<rect x="173.8" y="814" width="5" height="66.4" fill="rgba(0,0,0,0.2)" filter="url(#blur4)"/>
<rect x="318.5" y="814" width="5" height="66.4" fill="rgba(0,0,0,0.2)" filter="url(#blur4)"/>
<rect x="175.8" y="809" width="145.7" height="70.4" rx="7" fill="rgba(17,19,17,0.85)" stroke="#070707" stroke-width="2"/>
<path d="M177 838 V816.2 Q177 810.2 183 810.2 H314.3 Q320.3 810.2 320.3 816.2 V838 Z" fill="url(#lg20)"/>
<path d="M177 838 V816.2 Q177 810.2 183 810.2 H314.3 Q320.3 810.2 320.3 816.2 V838 Z" fill="url(#rg21)"/>
<path d="M182.8 811 H314.5" stroke="url(#lg22)" stroke-width="1.2"/>
<g transform="translate(192 812.5)" fill="none" stroke="#a4ec98"><path d="M17 1.9C13.8 0.6 12.1 2.3 11.6 5.6L9.4 16.2C8.7 19.8 5.6 21.2 1.3 20.3" stroke-width="2.6"/><path d="M6 7.4H13.3" stroke-width="2.1"/><circle cx="16.1" cy="2.3" r="1.5" fill="#a4ec98" stroke="none"/><circle cx="2" cy="19.5" r="1.7" fill="#a4ec98" stroke="none"/></g>
<text x="215.6" y="830.2" font-family="Liberation Sans" font-size="17.3" font-weight="bold" textLength="67.1" lengthAdjust="spacingAndGlyphs" fill="rgba(0,0,0,0.35)">Is Server</text>
<text x="214.6" y="829.2" font-family="Liberation Sans" font-size="17.3" font-weight="bold" textLength="67.1" lengthAdjust="spacingAndGlyphs" fill="#f4f4f4">Is Server</text>
<text x="190.4" y="865.3" font-family="Liberation Sans" font-size="16.8" textLength="90.6" lengthAdjust="spacingAndGlyphs" fill="#f0f0f0">Return Value</text>
<path d="M304.4 855.3 L309.6 859.3 L304.4 863.3 Z" fill="#930000"/>
<circle cx="297" cy="859.3" r="7.2" fill="#930000"/>
<rect x="974.5" y="441.2" width="160.9" height="16" rx="8" fill="rgba(0,0,0,0.4)" filter="url(#blur4)"/>
<rect x="971.5" y="310.2" width="5" height="143" fill="rgba(0,0,0,0.2)" filter="url(#blur4)"/>
<rect x="1133.4" y="310.2" width="5" height="143" fill="rgba(0,0,0,0.2)" filter="url(#blur4)"/>
<rect x="973.5" y="305.2" width="162.9" height="147" rx="7" fill="rgba(17,19,17,0.85)" stroke="#070707" stroke-width="2"/>
<path d="M974.7 334 V312.4 Q974.7 306.4 980.7 306.4 H1129.2 Q1135.2 306.4 1135.2 312.4 V334 Z" fill="url(#lg23)"/>
<path d="M974.7 334 V312.4 Q974.7 306.4 980.7 306.4 H1129.2 Q1135.2 306.4 1135.2 312.4 V334 Z" fill="url(#rg24)"/>
<path d="M980.5 307.2 H1129.4" stroke="url(#lg25)" stroke-width="1.2"/>
<path d="M991 310V328 M986 319H991 M991 311H997 M991 327H997 M999 311H1006 M999 316H1004" stroke="#f0f0f0" stroke-width="2" fill="none"/>
<path d="M994 320H997" stroke="#f0f0f0" stroke-width="2"/>
<text x="1013" y="326.2" font-family="Liberation Sans" font-size="17.3" font-weight="bold" textLength="77" lengthAdjust="spacingAndGlyphs" fill="rgba(0,0,0,0.35)">Sequence</text>
<text x="1012" y="325.2" font-family="Liberation Sans" font-size="17.3" font-weight="bold" textLength="77" lengthAdjust="spacingAndGlyphs" fill="#f4f4f4">Sequence</text>
<path d="M988 347.55 L996.06 347.55 L1003.5 356.3 L996.06 365.05 L988 365.05 Z" fill="#f4f4f4" stroke="#f4f4f4" stroke-width="1.4" stroke-linejoin="round"/>
<text x="1052" y="362.3" font-family="Liberation Sans" font-size="16.8" textLength="47" lengthAdjust="spacingAndGlyphs" fill="#f0f0f0">Then 0</text>
<path d="M1106 347.55 L1114.06 347.55 L1121.5 356.3 L1114.06 365.05 L1106 365.05 Z" fill="#f4f4f4" stroke="#f4f4f4" stroke-width="1.4" stroke-linejoin="round"/>
<text x="1052" y="399.4" font-family="Liberation Sans" font-size="16.8" textLength="47" lengthAdjust="spacingAndGlyphs" fill="#f0f0f0">Then 1</text>
<path d="M1106 384.65 L1114.06 384.65 L1121.5 393.4 L1114.06 402.15 L1106 402.15 Z" fill="#f4f4f4" stroke="#f4f4f4" stroke-width="1.4" stroke-linejoin="round"/>
<text x="1046.6" y="444.5" font-family="Liberation Sans" font-size="16.8" textLength="52.4" lengthAdjust="spacingAndGlyphs" fill="#f0f0f0">Add pin</text>
<path d="M1109 438.5H1124M1116.5 431V446" stroke="#f4f4f4" stroke-width="3.2"/>
<path d="M856.8 349.7 L861.8 354.7 L856.8 359.7 Z" fill="#cfcfcf"/>
<circle cx="850.8" cy="354.7" r="7.8" fill="#f4f4f4"/>
<path d="M856.3 1567 L861.3 1572 L856.3 1577 Z" fill="#cfcfcf"/>
<circle cx="850.3" cy="1572" r="7.8" fill="#f4f4f4"/>
<rect x="1346.8" y="740.2" width="231.2" height="120.3" rx="14" fill="url(#lg26)"/>
<rect x="1350.2" y="743.6" width="224.4" height="113.5" rx="10.6" fill="url(#lg27)"/>
<rect x="1351.8" y="745.2" width="221.2" height="110.3" rx="7" fill="#151714" stroke="#070707" stroke-width="2"/>
<path d="M1352.8 840.5 H1572 V848.5 Q1572 854.5 1566 854.5 H1358.8 Q1352.8 854.5 1352.8 848.5 Z" fill="url(#lg28)"/>
<path d="M1353 774.7 V752.4 Q1353 746.4 1359 746.4 H1565.8 Q1571.8 746.4 1571.8 752.4 V774.7 Z" fill="url(#lg29)"/>
<path d="M1353 774.7 V752.4 Q1353 746.4 1359 746.4 H1565.8 Q1571.8 746.4 1571.8 752.4 V774.7 Z" fill="url(#rg30)"/>
<path d="M1358.8 747.2 H1566" stroke="url(#lg31)" stroke-width="1.2"/>
<path d="M1380 753.5 A7 7 0 1 0 1380 766.5" fill="none" stroke="#f0f0f0" stroke-width="2"/>
<path d="M1365 760H1370" stroke="#f0f0f0" stroke-width="2"/>
<path d="M1379 750 L1384 753.2 L1379 756.5 Z" fill="#f0f0f0"/>
<path d="M1379 770 L1384 766.8 L1379 763.5 Z" fill="#f0f0f0"/>
<text x="1391.6" y="767.2" font-family="Liberation Sans" font-size="17.3" font-weight="bold" textLength="55.1" lengthAdjust="spacingAndGlyphs" fill="rgba(0,0,0,0.35)">Branch</text>
<text x="1390.6" y="766.2" font-family="Liberation Sans" font-size="17.3" font-weight="bold" textLength="55.1" lengthAdjust="spacingAndGlyphs" fill="#f4f4f4">Branch</text>
<path d="M1366 788.25 L1374.06 788.25 L1381.5 797 L1374.06 805.75 L1366 805.75 Z" fill="#f4f4f4" stroke="#f4f4f4" stroke-width="1.4" stroke-linejoin="round"/>
<text x="1503.2" y="803" font-family="Liberation Sans" font-size="16.8" textLength="32.7" lengthAdjust="spacingAndGlyphs" fill="#f0f0f0">True</text>
<path d="M1543 788.25 L1551.06 788.25 L1558.5 797 L1551.06 805.75 L1543 805.75 Z" fill="#f4f4f4" stroke="#f4f4f4" stroke-width="1.4" stroke-linejoin="round"/>
<path d="M1380.4 829 L1385.6 833 L1380.4 837 Z" fill="#930000"/>
<circle cx="1373" cy="833" r="7.2" fill="#930000"/>
<text x="1392.6" y="839" font-family="Liberation Sans" font-size="16.8" textLength="66.8" lengthAdjust="spacingAndGlyphs" fill="#f0f0f0">Condition</text>
<text x="1498.9" y="839" font-family="Liberation Sans" font-size="16.8" textLength="37" lengthAdjust="spacingAndGlyphs" fill="#f0f0f0">False</text>
<path d="M1544 825.25 L1551.06 825.25 L1557.5 833 L1551.06 840.75 L1544 840.75 Z" fill="none" stroke="#d8d8d8" stroke-width="2" stroke-linejoin="round"/>
<rect x="830.5" y="987.6" width="173.5" height="14" rx="6" fill="rgba(0,0,0,0.45)" filter="url(#blur4)"/>
<rect x="827.5" y="956" width="179.5" height="40.6" rx="20.3" fill="rgba(30,32,30,0.5)" stroke="#0a0a0a" stroke-width="2"/>
<path d="M828.5 981.41 V976.3 Q828.5 957 847.8 957 H986.7 Q1006 957 1006 976.3 V981.41 Z" fill="url(#rg32)"/>
<rect x="828.5" y="957" width="177.5" height="38.6" rx="19.3" fill="url(#lg33)"/>
<text x="849.8" y="982.3" font-family="Liberation Sans" font-size="16.8" textLength="113.5" lengthAdjust="spacingAndGlyphs" fill="#f0f0f0">Decay Multiplier</text>
<path d="M985.4 972.3 L990.6 976.3 L985.4 980.3 Z" fill="#8ae83a"/>
<circle cx="978" cy="976.3" r="7.2" fill="#8ae83a"/>
<rect x="1116.7" y="928.7" width="176.6" height="85.3" rx="26" fill="url(#lg34)"/>
<rect x="1120.1" y="932.1" width="169.8" height="78.5" rx="23" fill="#2a1d0a"/>
<rect x="1120.7" y="932.7" width="168.6" height="77.3" rx="22" fill="#0a0a0a"/>
<rect x="1122.7" y="934.7" width="164.6" height="73.3" rx="20" fill="#1f201f"/>
<rect x="1122.7" y="934.7" width="164.6" height="73.3" rx="20" fill="url(#lg35)"/>
<path d="M1149.7 948 L1154.9 952 L1149.7 956 Z" fill="#8ae83a"/>
<circle cx="1142.3" cy="952" r="7.2" fill="#8ae83a"/>
<path d="M1149.7 982.6 L1154.9 986.6 L1149.7 990.6 Z" fill="#8ae83a"/>
<circle cx="1142.3" cy="986.6" r="5.9" fill="#121212" stroke="#8ae83a" stroke-width="2.6"/>
<rect x="1168.75" y="976.05" width="32.5" height="21.8" fill="#121212" stroke="#c4c4c4" stroke-width="1.5"/>
<text x="1173.5" y="992.75" font-family="Liberation Sans" font-size="16" textLength="23" lengthAdjust="spacingAndGlyphs" fill="#f0f0f0">0.0</text>
<path d="M1199 967L1211 973.5L1199 980" fill="none" stroke="#9a9a9a" stroke-width="3"/>
<path d="M1270.4 967 L1275.6 971 L1270.4 975 Z" fill="#930000"/>
<circle cx="1263" cy="971" r="7.2" fill="#930000"/>
<rect x="1410" y="929.3" width="295.6" height="125.5" rx="14" fill="url(#lg36)"/>
<rect x="1413.4" y="932.7" width="288.8" height="118.7" rx="10.6" fill="url(#lg37)"/>
<rect x="1415" y="934.3" width="285.6" height="115.5" rx="7" fill="#151714" stroke="#070707" stroke-width="2"/>
<path d="M1416 1034.8 H1699.6 V1042.8 Q1699.6 1048.8 1693.6 1048.8 H1422 Q1416 1048.8 1416 1042.8 Z" fill="url(#lg38)"/>
<path d="M1416.2 963.7 V941.5 Q1416.2 935.5 1422.2 935.5 H1693.4 Q1699.4 935.5 1699.4 941.5 V963.7 Z" fill="url(#lg39)"/>
<path d="M1416.2 963.7 V941.5 Q1416.2 935.5 1422.2 935.5 H1693.4 Q1699.4 935.5 1699.4 941.5 V963.7 Z" fill="url(#rg40)"/>
<path d="M1422 936.3 H1693.6" stroke="url(#lg41)" stroke-width="1.2"/>
<g transform="translate(1431 938.5)" fill="none" stroke="#a4ec98"><path d="M17 1.9C13.8 0.6 12.1 2.3 11.6 5.6L9.4 16.2C8.7 19.8 5.6 21.2 1.3 20.3" stroke-width="2.6"/><path d="M6 7.4H13.3" stroke-width="2.1"/><circle cx="16.1" cy="2.3" r="1.5" fill="#a4ec98" stroke="none"/><circle cx="2" cy="19.5" r="1.7" fill="#a4ec98" stroke="none"/></g>
<text x="1454.4" y="956.2" font-family="Liberation Sans" font-size="17.3" font-weight="bold" textLength="184.5" lengthAdjust="spacingAndGlyphs" fill="rgba(0,0,0,0.35)">Random Float in Range</text>
<text x="1453.4" y="955.2" font-family="Liberation Sans" font-size="17.3" font-weight="bold" textLength="184.5" lengthAdjust="spacingAndGlyphs" fill="#f4f4f4">Random Float in Range</text>
<path d="M1444 983.7 L1449.2 987.7 L1444 991.7 Z" fill="#8ae83a"/>
<circle cx="1436.6" cy="987.7" r="5.9" fill="#121212" stroke="#8ae83a" stroke-width="2.6"/>
<text x="1455.5" y="991.2" font-family="Liberation Sans" font-size="16.8" textLength="26" lengthAdjust="spacingAndGlyphs" fill="#f0f0f0">Min</text>
<rect x="1489.75" y="977.25" width="33.3" height="21" fill="#121212" stroke="#c4c4c4" stroke-width="1.5"/>
<text x="1495.9" y="993.55" font-family="Liberation Sans" font-size="16" textLength="21" lengthAdjust="spacingAndGlyphs" fill="#f0f0f0">0.0</text>
<path d="M1444 1023.5 L1449.2 1027.5 L1444 1031.5 Z" fill="#8ae83a"/>
<circle cx="1436.6" cy="1027.5" r="5.9" fill="#121212" stroke="#8ae83a" stroke-width="2.6"/>
<text x="1455.5" y="1031" font-family="Liberation Sans" font-size="16.8" textLength="30" lengthAdjust="spacingAndGlyphs" fill="#f0f0f0">Max</text>
<rect x="1493.75" y="1016.75" width="42.1" height="22.1" fill="#121212" stroke="#c4c4c4" stroke-width="1.5"/>
<text x="1499.8" y="1033.6" font-family="Liberation Sans" font-size="16" textLength="30" lengthAdjust="spacingAndGlyphs" fill="#f0f0f0">0.25</text>
<text x="1569.6" y="991.2" font-family="Liberation Sans" font-size="16.8" textLength="90" lengthAdjust="spacingAndGlyphs" fill="#f0f0f0">Return Value</text>
<path d="M1680.7 983.7 L1685.9 987.7 L1680.7 991.7 Z" fill="#8ae83a"/>
<circle cx="1673.3" cy="987.7" r="7.2" fill="#8ae83a"/>
<rect x="1788" y="740.4" width="263.2" height="117" rx="14" fill="url(#lg42)"/>
<rect x="1791.4" y="743.8" width="256.4" height="110.2" rx="10.6" fill="url(#lg43)"/>
<rect x="1793" y="745.4" width="253.2" height="107" rx="7" fill="#151714" stroke="#070707" stroke-width="2"/>
<path d="M1794 837.4 H2045.2 V845.4 Q2045.2 851.4 2039.2 851.4 H1800 Q1794 851.4 1794 845.4 Z" fill="url(#lg44)"/>
<path d="M1794.2 774.7 V752.6 Q1794.2 746.6 1800.2 746.6 H2039 Q2045 746.6 2045 752.6 V774.7 Z" fill="url(#lg45)"/>
<path d="M1794.2 774.7 V752.6 Q1794.2 746.6 1800.2 746.6 H2039 Q2045 746.6 2045 752.6 V774.7 Z" fill="url(#rg46)"/>
<path d="M1800 747.4 H2039.2" stroke="url(#lg47)" stroke-width="1.2"/>
<g transform="translate(1809 749.5)" fill="none" stroke="#5ab8f4"><path d="M17 1.9C13.8 0.6 12.1 2.3 11.6 5.6L9.4 16.2C8.7 19.8 5.6 21.2 1.3 20.3" stroke-width="2.6"/><path d="M6 7.4H13.3" stroke-width="2.1"/><circle cx="16.1" cy="2.3" r="1.5" fill="#5ab8f4" stroke="none"/><circle cx="2" cy="19.5" r="1.7" fill="#5ab8f4" stroke="none"/></g>
<text x="1832.5" y="767.2" font-family="Liberation Sans" font-size="17.3" font-weight="bold" textLength="43.9" lengthAdjust="spacingAndGlyphs" fill="rgba(0,0,0,0.35)">Delay</text>
<text x="1831.5" y="766.2" font-family="Liberation Sans" font-size="17.3" font-weight="bold" textLength="43.9" lengthAdjust="spacingAndGlyphs" fill="#f4f4f4">Delay</text>
<circle cx="2043" cy="745.4" r="15.7" fill="#f6f6f6" stroke="#1a1a1a" stroke-width="1"/>
<path d="M2042 735.4V745.9H2051" fill="none" stroke="#333" stroke-width="1.6"/>
<path d="M1807 788.65 L1815.06 788.65 L1822.5 797.4 L1815.06 806.15 L1807 806.15 Z" fill="#f4f4f4" stroke="#f4f4f4" stroke-width="1.4" stroke-linejoin="round"/>
<text x="1933.6" y="803.4" font-family="Liberation Sans" font-size="16.8" textLength="74.4" lengthAdjust="spacingAndGlyphs" fill="#f0f0f0">Completed</text>
<path d="M2016 788.65 L2024.06 788.65 L2031.5 797.4 L2024.06 806.15 L2016 806.15 Z" fill="#f4f4f4" stroke="#f4f4f4" stroke-width="1.4" stroke-linejoin="round"/>
<path d="M1821.4 829 L1826.6 833 L1821.4 837 Z" fill="#8ae83a"/>
<circle cx="1814" cy="833" r="7.2" fill="#8ae83a"/>
<text x="1833.5" y="839" font-family="Liberation Sans" font-size="16.8" textLength="61" lengthAdjust="spacingAndGlyphs" fill="#f0f0f0">Duration</text>
<rect x="2333.8" y="740.6" width="408.8" height="281.4" rx="14" fill="url(#lg48)"/>
<rect x="2337.2" y="744" width="402" height="274.6" rx="10.6" fill="url(#lg49)"/>
<rect x="2338.8" y="745.6" width="398.8" height="271.4" rx="7" fill="#151714" stroke="#070707" stroke-width="2"/>
<path d="M2339.8 1002 H2736.6 V1010 Q2736.6 1016 2730.6 1016 H2345.8 Q2339.8 1016 2339.8 1010 Z" fill="url(#lg50)"/>
<path d="M2340 775 V752.8 Q2340 746.8 2346 746.8 H2730.4 Q2736.4 746.8 2736.4 752.8 V775 Z" fill="url(#lg51)"/>
<path d="M2340 775 V752.8 Q2340 746.8 2346 746.8 H2730.4 Q2736.4 746.8 2736.4 752.8 V775 Z" fill="url(#rg52)"/>
<path d="M2345.8 747.6 H2730.6" stroke="url(#lg53)" stroke-width="1.2"/>
<g transform="translate(2355 750)" fill="none" stroke="#5ab8f4"><path d="M17 1.9C13.8 0.6 12.1 2.3 11.6 5.6L9.4 16.2C8.7 19.8 5.6 21.2 1.3 20.3" stroke-width="2.6"/><path d="M6 7.4H13.3" stroke-width="2.1"/><circle cx="16.1" cy="2.3" r="1.5" fill="#5ab8f4" stroke="none"/><circle cx="2" cy="19.5" r="1.7" fill="#5ab8f4" stroke="none"/></g>
<text x="2378.3" y="767.7" font-family="Liberation Sans" font-size="17.3" font-weight="bold" textLength="224.7" lengthAdjust="spacingAndGlyphs" fill="rgba(0,0,0,0.35)">Set Timer by Function Name</text>
<text x="2377.3" y="766.7" font-family="Liberation Sans" font-size="17.3" font-weight="bold" textLength="224.7" lengthAdjust="spacingAndGlyphs" fill="#f4f4f4">Set Timer by Function Name</text>
<path d="M2353 788.75 L2361.06 788.75 L2368.5 797.5 L2361.06 806.25 L2353 806.25 Z" fill="#f4f4f4" stroke="#f4f4f4" stroke-width="1.4" stroke-linejoin="round"/>
<path d="M2709 789.75 L2716.06 789.75 L2722.5 797.5 L2716.06 805.25 L2709 805.25 Z" fill="none" stroke="#d8d8d8" stroke-width="2" stroke-linejoin="round"/>
<path d="M2368.8 830 L2374 834 L2368.8 838 Z" fill="#09a6ee"/>
<circle cx="2361.4" cy="834" r="5.9" fill="#121212" stroke="#09a6ee" stroke-width="2.6"/>
<text x="2379.5" y="840" font-family="Liberation Sans" font-size="16.8" textLength="44.5" lengthAdjust="spacingAndGlyphs" fill="#f0f0f0">Object</text>
<rect x="2434" y="824.5" width="98.4" height="21.2" rx="3" fill="#262626"/>
<text x="2438" y="841" font-family="Liberation Sans" font-size="14" textLength="78" lengthAdjust="spacingAndGlyphs" fill="#000">Select Asset</text>
<text x="2437" y="840" font-family="Liberation Sans" font-size="14" textLength="78" lengthAdjust="spacingAndGlyphs" fill="#8a8a8a">Select Asset</text>
<path d="M2518 832H2528L2523 838Z" fill="#9a9a9a"/>
<path d="M2539 835L2546 829V832.5H2553V837.5H2546V841Z" fill="#3a3a3a"/>
<circle cx="2566" cy="833" r="5" fill="none" stroke="#3a3a3a" stroke-width="2"/><path d="M2562.5 837L2558 842" stroke="#3a3a3a" stroke-width="2.2"/>
<text x="2606.3" y="840" font-family="Liberation Sans" font-size="16.8" textLength="90.7" lengthAdjust="spacingAndGlyphs" fill="#f0f0f0">Return Value</text>
<path d="M2720.3 830 L2725.5 834 L2720.3 838 Z" fill="#1a5bd8"/>
<circle cx="2712.9" cy="834" r="5.9" fill="#121212" stroke="#1a5bd8" stroke-width="2.6"/>
<path d="M2368.4 878.9 L2373.6 882.9 L2368.4 886.9 Z" fill="#d000c8"/>
<circle cx="2361" cy="882.9" r="5.9" fill="#121212" stroke="#d000c8" stroke-width="2.6"/>
<text x="2379.5" y="877.2" font-family="Liberation Sans" font-size="16.8" textLength="107.2" lengthAdjust="spacingAndGlyphs" fill="#f0f0f0">Function Name</text>
<rect x="2387.05" y="882.15" width="86.8" height="21.7" fill="#121212" stroke="#c4c4c4" stroke-width="1.5"/>
<text x="2392.45" y="898.8" font-family="Liberation Sans" font-size="16" textLength="76" lengthAdjust="spacingAndGlyphs" fill="#f0f0f0">ItemDecay</text>
<path d="M2368.4 925.6 L2373.6 929.6 L2368.4 933.6 Z" fill="#8ae83a"/>
<circle cx="2361" cy="929.6" r="7.2" fill="#8ae83a"/>
<text x="2379.5" y="935.6" font-family="Liberation Sans" font-size="16.8" textLength="35" lengthAdjust="spacingAndGlyphs" fill="#f0f0f0">Time</text>
<path d="M2368.4 963.8 L2373.6 967.8 L2368.4 971.8 Z" fill="#930000"/>
<circle cx="2361" cy="967.8" r="5.9" fill="#121212" stroke="#930000" stroke-width="2.6"/>
<text x="2379.5" y="970.7" font-family="Liberation Sans" font-size="16.8" textLength="57" lengthAdjust="spacingAndGlyphs" fill="#f0f0f0">Looping</text>
<rect x="2446.8" y="957.6" width="20.8" height="21.3" rx="3" fill="#3c3c3c" stroke="#777" stroke-width="1"/>
<path d="M2450.5 968L2455.5 973.5L2464 962.5" fill="none" stroke="#d8d8d8" stroke-width="2.4"/>
<path d="M2531.5 998H2546L2538.7 1008Z" fill="#cfcfcf"/>
<rect x="1914.5" y="992.6" width="188.7" height="52.1" rx="26.05" fill="url(#lg54)"/>
<rect x="1917.9" y="996" width="181.9" height="45.3" rx="22.65" fill="#2a1d0a"/>
<rect x="1919.5" y="997.6" width="178.7" height="42.1" rx="21.05" fill="#222522" stroke="#0a0a0a" stroke-width="2"/>
<path d="M1920.5 1023.94 V1018.65 Q1920.5 998.6 1940.55 998.6 H2077.15 Q2097.2 998.6 2097.2 1018.65 V1023.94 Z" fill="url(#rg55)"/>
<rect x="1920.5" y="998.6" width="176.7" height="40.1" rx="20.05" fill="url(#lg56)"/>
<text x="1941.3" y="1024.2" font-family="Liberation Sans" font-size="16.8" textLength="113.3" lengthAdjust="spacingAndGlyphs" fill="#f0f0f0">Decay Multiplier</text>
<path d="M2077.4 1014.2 L2082.6 1018.2 L2077.4 1022.2 Z" fill="#8ae83a"/>
<circle cx="2070" cy="1018.2" r="7.2" fill="#8ae83a"/>
<rect x="2103.2" y="929.4" width="187.8" height="84.2" rx="26" fill="url(#lg57)"/>
<rect x="2106.6" y="932.8" width="181" height="77.4" rx="23" fill="#2a1d0a"/>
<rect x="2107.2" y="933.4" width="179.8" height="76.2" rx="22" fill="#0a0a0a"/>
<rect x="2109.2" y="935.4" width="175.8" height="72.2" rx="20" fill="#1f201f"/>
<rect x="2109.2" y="935.4" width="175.8" height="72.2" rx="20" fill="url(#lg58)"/>
<path d="M2137.1 952.4 L2142.3 956.4 L2137.1 960.4 Z" fill="#8ae83a"/>
<circle cx="2129.7" cy="956.4" r="5.9" fill="#121212" stroke="#8ae83a" stroke-width="2.6"/>
<rect x="2156.05" y="945.55" width="41.7" height="22.4" fill="#121212" stroke="#c4c4c4" stroke-width="1.5"/>
<text x="2161.4" y="962.55" font-family="Liberation Sans" font-size="16" textLength="31" lengthAdjust="spacingAndGlyphs" fill="#f0f0f0">60.0</text>
<rect x="2188.6" y="969.5" width="15.4" height="4" fill="#8e8e8e"/>
<rect x="2193.5" y="976" width="5" height="4" fill="#8e8e8e"/>
<path d="M2137.1 987.4 L2142.3 991.4 L2137.1 995.4 Z" fill="#8ae83a"/>
<circle cx="2129.7" cy="991.4" r="7.2" fill="#8ae83a"/>
<path d="M2266.9 967.2 L2272.1 971.2 L2266.9 975.2 Z" fill="#8ae83a"/>
<circle cx="2259.5" cy="971.2" r="7.2" fill="#8ae83a"/>
<rect x="1898.3" y="408.2" width="285.6" height="16" rx="8" fill="rgba(0,0,0,0.4)" filter="url(#blur4)"/>
<rect x="1895.3" y="288.2" width="5" height="132" fill="rgba(0,0,0,0.2)" filter="url(#blur4)"/>
<rect x="2181.9" y="288.2" width="5" height="132" fill="rgba(0,0,0,0.2)" filter="url(#blur4)"/>
<rect x="1897.3" y="283.2" width="287.6" height="136" rx="7" fill="rgba(17,19,17,0.85)" stroke="#070707" stroke-width="2"/>
<path d="M1898.5 336 V290.4 Q1898.5 284.4 1904.5 284.4 H2177.7 Q2183.7 284.4 2183.7 290.4 V336 Z" fill="url(#lg59)"/>
<path d="M1898.5 336 V290.4 Q1898.5 284.4 1904.5 284.4 H2177.7 Q2183.7 284.4 2183.7 290.4 V336 Z" fill="url(#rg60)"/>
<path d="M1904.3 285.2 H2177.9" stroke="url(#lg61)" stroke-width="1.2"/>
<path d="M1920.5 289 L1930 298.5 L1920.5 308 L1911 298.5 Z" fill="none" stroke="#f2f2f2" stroke-width="2.4" stroke-linejoin="round"/>
<path d="M1923 295 A4 4 0 1 0 1923 302" fill="none" stroke="#f2f2f2" stroke-width="1.6"/>
<text x="1937.6" y="305.5" font-family="Liberation Sans" font-size="17.3" font-weight="bold" textLength="121.1" lengthAdjust="spacingAndGlyphs" fill="rgba(0,0,0,0.35)">Construct Slots</text>
<text x="1936.6" y="304.5" font-family="Liberation Sans" font-size="17.3" font-weight="bold" textLength="121.1" lengthAdjust="spacingAndGlyphs" fill="#f4f4f4">Construct Slots</text>
<text x="1937.7" y="327.5" font-family="Liberation Sans" font-size="15.4" font-style="italic" textLength="209.1" lengthAdjust="spacingAndGlyphs" fill="#a7ae8c">Target is BP Master Inventory</text>
<path d="M1912 349.95 L1920.06 349.95 L1927.5 358.7 L1920.06 367.45 L1912 367.45 Z" fill="#f4f4f4" stroke="#f4f4f4" stroke-width="1.4" stroke-linejoin="round"/>
<path d="M2155.4 349.95 L2163.46 349.95 L2170.9 358.7 L2163.46 367.45 L2155.4 367.45 Z" fill="#f4f4f4" stroke="#f4f4f4" stroke-width="1.4" stroke-linejoin="round"/>
<path d="M1927 392.7 L1932.2 396.7 L1927 400.7 Z" fill="#09a6ee"/>
<circle cx="1919.6" cy="396.7" r="5.9" fill="#121212" stroke="#09a6ee" stroke-width="2.6"/>
<text x="1938.7" y="400.3" font-family="Liberation Sans" font-size="16.8" textLength="45.6" lengthAdjust="spacingAndGlyphs" fill="#f0f0f0">Target</text>
<rect x="1991.65" y="386.15" width="36.3" height="21.4" fill="#121212" stroke="#c4c4c4" stroke-width="1.5"/>
<text x="1996.8" y="402.65" font-family="Liberation Sans" font-size="16" textLength="26" lengthAdjust="spacingAndGlyphs" fill="#f0f0f0">self</text>
<rect x="2381.6" y="408" width="285.3" height="16" rx="8" fill="rgba(0,0,0,0.4)" filter="url(#blur4)"/>
<rect x="2378.6" y="288.7" width="5" height="131.3" fill="rgba(0,0,0,0.2)" filter="url(#blur4)"/>
<rect x="2664.9" y="288.7" width="5" height="131.3" fill="rgba(0,0,0,0.2)" filter="url(#blur4)"/>
<rect x="2380.6" y="283.7" width="287.3" height="135.3" rx="7" fill="rgba(17,19,17,0.85)" stroke="#070707" stroke-width="2"/>
<path d="M2381.8 336 V290.9 Q2381.8 284.9 2387.8 284.9 H2660.7 Q2666.7 284.9 2666.7 290.9 V336 Z" fill="url(#lg62)"/>
<path d="M2381.8 336 V290.9 Q2381.8 284.9 2387.8 284.9 H2660.7 Q2666.7 284.9 2666.7 290.9 V336 Z" fill="url(#rg63)"/>
<path d="M2387.6 285.7 H2660.9" stroke="url(#lg64)" stroke-width="1.2"/>
<g transform="translate(2397 288.5)" fill="none" stroke="#5ab8f4"><path d="M17 1.9C13.8 0.6 12.1 2.3 11.6 5.6L9.4 16.2C8.7 19.8 5.6 21.2 1.3 20.3" stroke-width="2.6"/><path d="M6 7.4H13.3" stroke-width="2.1"/><circle cx="16.1" cy="2.3" r="1.5" fill="#5ab8f4" stroke="none"/><circle cx="2" cy="19.5" r="1.7" fill="#5ab8f4" stroke="none"/></g>
<text x="2420.4" y="306.2" font-family="Liberation Sans" font-size="17.3" font-weight="bold" textLength="147" lengthAdjust="spacingAndGlyphs" fill="rgba(0,0,0,0.35)">Add Starting Items</text>
<text x="2419.4" y="305.2" font-family="Liberation Sans" font-size="17.3" font-weight="bold" textLength="147" lengthAdjust="spacingAndGlyphs" fill="#f4f4f4">Add Starting Items</text>
<text x="2419.4" y="327.5" font-family="Liberation Sans" font-size="15.4" font-style="italic" textLength="210.2" lengthAdjust="spacingAndGlyphs" fill="#a7ae8c">Target is BP Master Inventory</text>
<path d="M2395 349.65 L2403.06 349.65 L2410.5 358.4 L2403.06 367.15 L2395 367.15 Z" fill="#f4f4f4" stroke="#f4f4f4" stroke-width="1.4" stroke-linejoin="round"/>
<path d="M2637.8 349.65 L2645.86 349.65 L2653.3 358.4 L2645.86 367.15 L2637.8 367.15 Z" fill="#f4f4f4" stroke="#f4f4f4" stroke-width="1.4" stroke-linejoin="round"/>
<path d="M2410.7 392.6 L2415.9 396.6 L2410.7 400.6 Z" fill="#09a6ee"/>
<circle cx="2403.3" cy="396.6" r="5.9" fill="#121212" stroke="#09a6ee" stroke-width="2.6"/>
<text x="2421.7" y="400.2" font-family="Liberation Sans" font-size="16.8" textLength="45.6" lengthAdjust="spacingAndGlyphs" fill="#f0f0f0">Target</text>
<rect x="2474.95" y="385.75" width="36.3" height="22.1" fill="#121212" stroke="#c4c4c4" stroke-width="1.5"/>
<text x="2480.1" y="402.6" font-family="Liberation Sans" font-size="16" textLength="26" lengthAdjust="spacingAndGlyphs" fill="#f0f0f0">self</text>
<text x="2580.4" y="400.2" font-family="Liberation Sans" font-size="16.8" textLength="45.9" lengthAdjust="spacingAndGlyphs" fill="#f0f0f0">Return</text>
<path d="M2649 392.6 L2654.2 396.6 L2649 400.6 Z" fill="#930000"/>
<circle cx="2641.6" cy="396.6" r="5.9" fill="#121212" stroke="#930000" stroke-width="2.6"/>
<rect x="3013.3" y="479" width="292" height="16" rx="8" fill="rgba(0,0,0,0.4)" filter="url(#blur4)"/>
<rect x="3010.3" y="395.8" width="5" height="95.2" fill="rgba(0,0,0,0.2)" filter="url(#blur4)"/>
<rect x="3303.3" y="395.8" width="5" height="95.2" fill="rgba(0,0,0,0.2)" filter="url(#blur4)"/>
<rect x="3012.3" y="390.8" width="294" height="99.2" rx="7" fill="rgba(17,19,17,0.85)" stroke="#070707" stroke-width="2"/>
<path d="M3013.5 444.2 V398 Q3013.5 392 3019.5 392 H3299.1 Q3305.1 392 3305.1 398 V444.2 Z" fill="url(#lg65)"/>
<path d="M3013.5 444.2 V398 Q3013.5 392 3019.5 392 H3299.1 Q3305.1 392 3305.1 398 V444.2 Z" fill="url(#rg66)"/>
<path d="M3019.3 392.8 H3299.3" stroke="url(#lg67)" stroke-width="1.2"/>
<g transform="translate(3028.3 396.5)" fill="none" stroke="#a4ec98"><path d="M17 1.9C13.8 0.6 12.1 2.3 11.6 5.6L9.4 16.2C8.7 19.8 5.6 21.2 1.3 20.3" stroke-width="2.6"/><path d="M6 7.4H13.3" stroke-width="2.1"/><circle cx="16.1" cy="2.3" r="1.5" fill="#a4ec98" stroke="none"/><circle cx="2" cy="19.5" r="1.7" fill="#a4ec98" stroke="none"/></g>
<text x="3051.7" y="414" font-family="Liberation Sans" font-size="17.3" font-weight="bold" textLength="79.9" lengthAdjust="spacingAndGlyphs" fill="rgba(0,0,0,0.35)">Get Owner</text>
<text x="3050.7" y="413" font-family="Liberation Sans" font-size="17.3" font-weight="bold" textLength="79.9" lengthAdjust="spacingAndGlyphs" fill="#f4f4f4">Get Owner</text>
<text x="3050.7" y="435.9" font-family="Liberation Sans" font-size="15.4" font-style="italic" textLength="189.1" lengthAdjust="spacingAndGlyphs" fill="#a7ae8c">Target is Actor Component</text>
<path d="M3041.8 462.8 L3047 466.8 L3041.8 470.8 Z" fill="#09a6ee"/>
<circle cx="3034.4" cy="466.8" r="5.9" fill="#121212" stroke="#09a6ee" stroke-width="2.6"/>
<text x="3054" y="471.2" font-family="Liberation Sans" font-size="16.8" textLength="45.6" lengthAdjust="spacingAndGlyphs" fill="#f0f0f0">Target</text>
<rect x="3106.05" y="457.35" width="37" height="21.2" fill="#121212" stroke="#c4c4c4" stroke-width="1.5"/>
<text x="3111.55" y="473.75" font-family="Liberation Sans" font-size="16" textLength="26" lengthAdjust="spacingAndGlyphs" fill="#f0f0f0">self</text>
<text x="3175.5" y="471.2" font-family="Liberation Sans" font-size="16.8" textLength="90.4" lengthAdjust="spacingAndGlyphs" fill="#f0f0f0">Return Value</text>
<path d="M3287.4 462.8 L3292.6 466.8 L3287.4 470.8 Z" fill="#09a6ee"/>
<circle cx="3280" cy="466.8" r="7.2" fill="#09a6ee"/>
<rect x="3410.7" y="435.1" width="67.3" height="16" rx="8" fill="rgba(0,0,0,0.4)" filter="url(#blur4)"/>
<rect x="3407.7" y="309.3" width="5" height="137.8" fill="rgba(0,0,0,0.2)" filter="url(#blur4)"/>
<rect x="3476" y="309.3" width="5" height="137.8" fill="rgba(0,0,0,0.2)" filter="url(#blur4)"/>
<rect x="3409.7" y="304.3" width="69.3" height="141.8" rx="7" fill="rgba(17,19,17,0.85)" stroke="#070707" stroke-width="2"/>
<path d="M3410.9 333.4 V311.5 Q3410.9 305.5 3416.9 305.5 H3471.8 Q3477.8 305.5 3477.8 311.5 V333.4 Z" fill="url(#lg68)"/>
<path d="M3410.9 333.4 V311.5 Q3410.9 305.5 3416.9 305.5 H3471.8 Q3477.8 305.5 3477.8 311.5 V333.4 Z" fill="url(#rg69)"/>
<path d="M3416.7 306.3 H3472" stroke="url(#lg70)" stroke-width="1.2"/>
<rect x="3422" y="308" width="4" height="19" fill="#d8d0b0"/>
<rect x="3423.5" y="348" width="2.5" height="18" fill="#e8e8e8"/>
<rect x="3423.5" y="385" width="2.5" height="14" fill="#09a6ee"/>
<rect x="3423.5" y="420" width="2.5" height="14" fill="#e03434"/>
<rect x="3011.2" y="717.5" width="204.1" height="16" rx="8" fill="rgba(0,0,0,0.4)" filter="url(#blur4)"/>
<rect x="3008.2" y="603.3" width="5" height="126.2" fill="rgba(0,0,0,0.2)" filter="url(#blur4)"/>
<rect x="3213.3" y="603.3" width="5" height="126.2" fill="rgba(0,0,0,0.2)" filter="url(#blur4)"/>
<rect x="3010.2" y="598.3" width="206.1" height="130.2" rx="7" fill="rgba(17,19,17,0.85)" stroke="#070707" stroke-width="2"/>
<path d="M3011.4 650.8 V605.5 Q3011.4 599.5 3017.4 599.5 H3209.1 Q3215.1 599.5 3215.1 605.5 V650.8 Z" fill="url(#lg71)"/>
<path d="M3011.4 650.8 V605.5 Q3011.4 599.5 3017.4 599.5 H3209.1 Q3215.1 599.5 3215.1 605.5 V650.8 Z" fill="url(#rg72)"/>
<path d="M3017.2 600.3 H3209.3" stroke="url(#lg73)" stroke-width="1.2"/>
<path d="M3032.8 603.9 L3042.3 613.4 L3032.8 622.9 L3023.3 613.4 Z" fill="none" stroke="#f2f2f2" stroke-width="2.4" stroke-linejoin="round"/>
<path d="M3035.3 609.9 A4 4 0 1 0 3035.3 616.9" fill="none" stroke="#f2f2f2" stroke-width="1.6"/>
<text x="3050.4" y="620.4" font-family="Liberation Sans" font-size="17.3" font-weight="bold" textLength="129.1" lengthAdjust="spacingAndGlyphs" fill="rgba(0,0,0,0.35)">OwnerDestroyed</text>
<text x="3049.4" y="619.4" font-family="Liberation Sans" font-size="17.3" font-weight="bold" textLength="129.1" lengthAdjust="spacingAndGlyphs" fill="#f4f4f4">OwnerDestroyed</text>
<text x="3049.4" y="642.4" font-family="Liberation Sans" font-size="15.4" font-style="italic" textLength="97.1" lengthAdjust="spacingAndGlyphs" fill="#c8a57a">Custom Event</text>
<rect x="3196" y="616.8" width="14.2" height="14.2" fill="#ff3a3a"/>
<path d="M3187.6 664.95 L3195.66 664.95 L3203.1 673.7 L3195.66 682.45 L3187.6 682.45 Z" fill="#f4f4f4" stroke="#f4f4f4" stroke-width="1.4" stroke-linejoin="round"/>
<text x="3062.4" y="715.1" font-family="Liberation Sans" font-size="16.8" textLength="112.4" lengthAdjust="spacingAndGlyphs" fill="#f0f0f0">Destroyed Actor</text>
<path d="M3198.6 705.1 L3203.8 709.1 L3198.6 713.1 Z" fill="#09a6ee"/>
<circle cx="3191.2" cy="709.1" r="5.9" fill="#121212" stroke="#09a6ee" stroke-width="2.6"/>
<rect x="3244.5" y="777.6" width="231.5" height="14" rx="6" fill="rgba(0,0,0,0.45)" filter="url(#blur4)"/>
<rect x="3241.5" y="746.1" width="237.5" height="40.5" rx="20.25" fill="rgba(30,32,30,0.5)" stroke="#0a0a0a" stroke-width="2"/>
<path d="M3242.5 771.45 V766.35 Q3242.5 747.1 3261.75 747.1 H3458.75 Q3478 747.1 3478 766.35 V771.45 Z" fill="url(#rg74)"/>
<rect x="3242.5" y="747.1" width="235.5" height="38.5" rx="19.25" fill="url(#lg75)"/>
<text x="3264" y="772.3" font-family="Liberation Sans" font-size="16.8" textLength="134.5" lengthAdjust="spacingAndGlyphs" fill="#f0f0f0">Should Spawn Bag</text>
<path d="M3421.4 762.3 L3426.6 766.3 L3421.4 770.3 Z" fill="#930000"/>
<circle cx="3414" cy="766.3" r="7.2" fill="#930000"/>
<rect x="2905.8" y="1458.2" width="285.5" height="16" rx="8" fill="rgba(0,0,0,0.4)" filter="url(#blur4)"/>
<rect x="2902.8" y="1338.8" width="5" height="131.4" fill="rgba(0,0,0,0.2)" filter="url(#blur4)"/>
<rect x="3189.3" y="1338.8" width="5" height="131.4" fill="rgba(0,0,0,0.2)" filter="url(#blur4)"/>
<rect x="2904.8" y="1333.8" width="287.5" height="135.4" rx="7" fill="rgba(17,19,17,0.85)" stroke="#070707" stroke-width="2"/>
<path d="M2906 1386.2 V1341 Q2906 1335 2912 1335 H3185.1 Q3191.1 1335 3191.1 1341 V1386.2 Z" fill="url(#lg76)"/>
<path d="M2906 1386.2 V1341 Q2906 1335 2912 1335 H3185.1 Q3191.1 1335 3191.1 1341 V1386.2 Z" fill="url(#rg77)"/>
<path d="M2911.8 1335.8 H3185.3" stroke="url(#lg78)" stroke-width="1.2"/>
<path d="M2928.4 1338.8 L2937.9 1348.3 L2928.4 1357.8 L2918.9 1348.3 Z" fill="none" stroke="#f2f2f2" stroke-width="2.4" stroke-linejoin="round"/>
<path d="M2930.9 1344.8 A4 4 0 1 0 2930.9 1351.8" fill="none" stroke="#f2f2f2" stroke-width="1.6"/>
<text x="2945.4" y="1355.5" font-family="Liberation Sans" font-size="17.3" font-weight="bold" textLength="120.6" lengthAdjust="spacingAndGlyphs" fill="rgba(0,0,0,0.35)">Construct Slots</text>
<text x="2944.4" y="1354.5" font-family="Liberation Sans" font-size="17.3" font-weight="bold" textLength="120.6" lengthAdjust="spacingAndGlyphs" fill="#f4f4f4">Construct Slots</text>
<text x="2944.4" y="1377.7" font-family="Liberation Sans" font-size="15.4" font-style="italic" textLength="210.3" lengthAdjust="spacingAndGlyphs" fill="#a7ae8c">Target is BP Master Inventory</text>
<path d="M2919.7 1399.25 L2927.76 1399.25 L2935.2 1408 L2927.76 1416.75 L2919.7 1416.75 Z" fill="#f4f4f4" stroke="#f4f4f4" stroke-width="1.4" stroke-linejoin="round"/>
<path d="M3162.8 1400.25 L3169.86 1400.25 L3176.3 1408 L3169.86 1415.75 L3162.8 1415.75 Z" fill="none" stroke="#d8d8d8" stroke-width="2" stroke-linejoin="round"/>
<path d="M2935.9 1442.3 L2941.1 1446.3 L2935.9 1450.3 Z" fill="#09a6ee"/>
<circle cx="2928.5" cy="1446.3" r="5.9" fill="#121212" stroke="#09a6ee" stroke-width="2.6"/>
<text x="2946.4" y="1449.9" font-family="Liberation Sans" font-size="16.8" textLength="45.6" lengthAdjust="spacingAndGlyphs" fill="#f0f0f0">Target</text>
<rect x="3000.15" y="1435.75" width="35.5" height="21.7" fill="#121212" stroke="#c4c4c4" stroke-width="1.5"/>
<text x="3004.9" y="1452.4" font-family="Liberation Sans" font-size="16" textLength="26" lengthAdjust="spacingAndGlyphs" fill="#f0f0f0">self</text>
<rect x="2612.4" y="1621.4" width="220.2" height="16" rx="8" fill="rgba(0,0,0,0.4)" filter="url(#blur4)"/>
<rect x="2609.4" y="1527.8" width="5" height="105.6" fill="rgba(0,0,0,0.2)" filter="url(#blur4)"/>
<rect x="2830.6" y="1527.8" width="5" height="105.6" fill="rgba(0,0,0,0.2)" filter="url(#blur4)"/>
<rect x="2611.4" y="1522.8" width="222.2" height="109.6" rx="7" fill="rgba(17,19,17,0.85)" stroke="#070707" stroke-width="2"/>
<path d="M2612.6 1552.1 V1530 Q2612.6 1524 2618.6 1524 H2826.4 Q2832.4 1524 2832.4 1530 V1552.1 Z" fill="url(#lg79)"/>
<path d="M2612.6 1552.1 V1530 Q2612.6 1524 2618.6 1524 H2826.4 Q2832.4 1524 2832.4 1530 V1552.1 Z" fill="url(#rg80)"/>
<path d="M2618.4 1524.8 H2826.6" stroke="url(#lg81)" stroke-width="1.2"/>
<path d="M2640 1531.1 A7 7 0 1 0 2640 1544.1" fill="none" stroke="#f0f0f0" stroke-width="2"/>
<path d="M2625 1537.6H2630" stroke="#f0f0f0" stroke-width="2"/>
<path d="M2639 1527.6 L2644 1530.8 L2639 1534.1 Z" fill="#f0f0f0"/>
<path d="M2639 1547.6 L2644 1544.4 L2639 1541.1 Z" fill="#f0f0f0"/>
<text x="2651" y="1544.8" font-family="Liberation Sans" font-size="17.3" font-weight="bold" textLength="55.5" lengthAdjust="spacingAndGlyphs" fill="rgba(0,0,0,0.35)">Branch</text>
<text x="2650" y="1543.8" font-family="Liberation Sans" font-size="17.3" font-weight="bold" textLength="55.5" lengthAdjust="spacingAndGlyphs" fill="#f4f4f4">Branch</text>
<path d="M2626.2 1565.85 L2634.26 1565.85 L2641.7 1574.6 L2634.26 1583.35 L2626.2 1583.35 Z" fill="#f4f4f4" stroke="#f4f4f4" stroke-width="1.4" stroke-linejoin="round"/>
<text x="2762.6" y="1580.6" font-family="Liberation Sans" font-size="16.8" textLength="32.7" lengthAdjust="spacingAndGlyphs" fill="#f0f0f0">True</text>
<path d="M2803.7 1565.85 L2811.76 1565.85 L2819.2 1574.6 L2811.76 1583.35 L2803.7 1583.35 Z" fill="#f4f4f4" stroke="#f4f4f4" stroke-width="1.4" stroke-linejoin="round"/>
<path d="M2640.4 1606.3 L2645.6 1610.3 L2640.4 1614.3 Z" fill="#930000"/>
<circle cx="2633" cy="1610.3" r="7.2" fill="#930000"/>
<text x="2652.4" y="1616.3" font-family="Liberation Sans" font-size="16.8" textLength="66.8" lengthAdjust="spacingAndGlyphs" fill="#f0f0f0">Condition</text>
<text x="2758.3" y="1616.3" font-family="Liberation Sans" font-size="16.8" textLength="37" lengthAdjust="spacingAndGlyphs" fill="#f0f0f0">False</text>
<path d="M2803.7 1601.55 L2811.76 1601.55 L2819.2 1610.3 L2811.76 1619.05 L2803.7 1619.05 Z" fill="#f4f4f4" stroke="#f4f4f4" stroke-width="1.4" stroke-linejoin="round"/>
<rect x="2908.5" y="1657" width="256.5" height="16" rx="8" fill="rgba(0,0,0,0.45)" filter="url(#blur4)"/>
<rect x="2905.5" y="1522.8" width="262.5" height="145.2" rx="15" fill="rgba(44,44,44,0.6)" stroke="#0e0e0e" stroke-width="2"/>
<rect x="2906.5" y="1523.8" width="260.5" height="143.2" rx="14" fill="url(#lg82)"/>
<path d="M2907 1555.8 V1538.3 Q2907 1524.3 2921 1524.3 H3152.5 Q3166.5 1524.3 3166.5 1538.3 V1555.8 Z" fill="url(#lg83)"/>
<path d="M2918.5 1525.3 H3155" stroke="url(#lg84)" stroke-width="1.5"/>
<text x="3021" y="1548.2" font-family="Liberation Sans" font-size="17.3" font-weight="bold" textLength="31.4" lengthAdjust="spacingAndGlyphs" fill="#f0f0f0">GET</text>
<path d="M2924 1565.85 L2932.06 1565.85 L2939.5 1574.6 L2932.06 1583.35 L2924 1583.35 Z" fill="#f4f4f4" stroke="#f4f4f4" stroke-width="1.4" stroke-linejoin="round"/>
<text x="3075" y="1580.6" font-family="Liberation Sans" font-size="16.8" textLength="53" lengthAdjust="spacingAndGlyphs" fill="#f0f0f0">Is Valid</text>
<path d="M3136.5 1565.85 L3144.56 1565.85 L3152 1574.6 L3144.56 1583.35 L3136.5 1583.35 Z" fill="#f4f4f4" stroke="#f4f4f4" stroke-width="1.4" stroke-linejoin="round"/>
<text x="3048" y="1617.6" font-family="Liberation Sans" font-size="16.8" textLength="80" lengthAdjust="spacingAndGlyphs" fill="#f0f0f0">Is Not Valid</text>
<path d="M3137.5 1603.85 L3144.56 1603.85 L3151 1611.6 L3144.56 1619.35 L3137.5 1619.35 Z" fill="none" stroke="#d8d8d8" stroke-width="2" stroke-linejoin="round"/>
<text x="2988.6" y="1652.2" font-family="Liberation Sans" font-size="16.8" textLength="139.4" lengthAdjust="spacingAndGlyphs" fill="#f0f0f0">Equipped Inventory</text>
<path d="M3146.2 1642.2 L3151.4 1646.2 L3146.2 1650.2 Z" fill="#09a6ee"/>
<circle cx="3138.8" cy="1646.2" r="7.2" fill="#09a6ee"/>
<circle cx="3167" cy="1511" r="7.3" fill="url(#rg85)"/><circle cx="3176" cy="1520" r="7.6" fill="rgba(0,0,0,0.35)" filter="url(#blur4)"/><circle cx="3175.5" cy="1518.5" r="7.3" fill="url(#rg85)"/>
<rect x="3239.7" y="1648.9" width="241.3" height="46.7" rx="20" fill="rgba(0,0,0,0.4)" filter="url(#blur4)"/>
<rect x="3240.7" y="1647.9" width="239.3" height="43.7" rx="21.85" fill="#0a0a0a"/>
<rect x="3242.2" y="1649.4" width="236.3" height="40.7" rx="20.35" fill="#2e3134"/>
<rect x="3250.7" y="1653.9" width="229.3" height="22" fill="url(#lg86)"/>
<path d="M3273.3 1665.7 L3278.5 1669.7 L3273.3 1673.7 Z" fill="#09a6ee"/>
<circle cx="3265.9" cy="1669.7" r="7.2" fill="#09a6ee"/>
<text x="3286" y="1675.7" font-family="Liberation Sans" font-size="16.8" textLength="43.7" lengthAdjust="spacingAndGlyphs" fill="#f0f0f0">Target</text>
<text x="3373.4" y="1675.7" font-family="Liberation Sans" font-size="16.8" textLength="52" lengthAdjust="spacingAndGlyphs" fill="#f0f0f0">Using F</text>
<rect x="1753.2" y="1682" width="165.6" height="14" rx="6" fill="rgba(0,0,0,0.45)" filter="url(#blur4)"/>
<rect x="1750.2" y="1648.4" width="171.6" height="42.6" rx="21.3" fill="rgba(30,32,30,0.5)" stroke="#0a0a0a" stroke-width="2"/>
<path d="M1751.2 1675.05 V1669.7 Q1751.2 1649.4 1771.5 1649.4 H1900.5 Q1920.8 1649.4 1920.8 1669.7 V1675.05 Z" fill="url(#rg87)"/>
<rect x="1751.2" y="1649.4" width="169.6" height="40.6" rx="20.3" fill="url(#lg88)"/>
<text x="1851.2" y="1675" font-family="Liberation Sans" font-size="16.8" textLength="27.3" lengthAdjust="spacingAndGlyphs" fill="#f0f0f0">Self</text>
<path d="M1899.8 1665 L1905 1669 L1899.8 1673 Z" fill="#09a6ee"/>
<circle cx="1892.4" cy="1669" r="7.2" fill="#09a6ee"/>
<rect x="1940.6" y="1666.8" width="252.8" height="16" rx="8" fill="rgba(0,0,0,0.4)" filter="url(#blur4)"/>
<rect x="1937.6" y="1611.4" width="5" height="67.4" fill="rgba(0,0,0,0.2)" filter="url(#blur4)"/>
<rect x="2191.4" y="1611.4" width="5" height="67.4" fill="rgba(0,0,0,0.2)" filter="url(#blur4)"/>
<rect x="1939.6" y="1606.4" width="254.8" height="71.4" rx="7" fill="rgba(17,19,17,0.85)" stroke="#070707" stroke-width="2"/>
<path d="M1940.8 1636.2 V1613.6 Q1940.8 1607.6 1946.8 1607.6 H2187.2 Q2193.2 1607.6 2193.2 1613.6 V1636.2 Z" fill="url(#lg89)"/>
<path d="M1940.8 1636.2 V1613.6 Q1940.8 1607.6 1946.8 1607.6 H2187.2 Q2193.2 1607.6 2193.2 1613.6 V1636.2 Z" fill="url(#rg90)"/>
<path d="M1946.6 1608.4 H2187.4" stroke="url(#lg91)" stroke-width="1.2"/>
<g transform="translate(1956 1611.3)" fill="none" stroke="#a4ec98"><path d="M17 1.9C13.8 0.6 12.1 2.3 11.6 5.6L9.4 16.2C8.7 19.8 5.6 21.2 1.3 20.3" stroke-width="2.6"/><path d="M6 7.4H13.3" stroke-width="2.1"/><circle cx="16.1" cy="2.3" r="1.5" fill="#a4ec98" stroke="none"/><circle cx="2" cy="19.5" r="1.7" fill="#a4ec98" stroke="none"/></g>
<text x="1979" y="1629" font-family="Liberation Sans" font-size="17.3" font-weight="bold" textLength="70.6" lengthAdjust="spacingAndGlyphs" fill="rgba(0,0,0,0.35)">GetClass</text>
<text x="1978" y="1628" font-family="Liberation Sans" font-size="17.3" font-weight="bold" textLength="70.6" lengthAdjust="spacingAndGlyphs" fill="#f4f4f4">GetClass</text>
<path d="M1968.7 1653.1 L1973.9 1657.1 L1968.7 1661.1 Z" fill="#09a6ee"/>
<circle cx="1961.3" cy="1657.1" r="7.2" fill="#09a6ee"/>
<text x="1979.8" y="1663.1" font-family="Liberation Sans" font-size="16.8" textLength="45.5" lengthAdjust="spacingAndGlyphs" fill="#f0f0f0">Object</text>
<text x="2063.3" y="1663.1" font-family="Liberation Sans" font-size="16.8" textLength="90.1" lengthAdjust="spacingAndGlyphs" fill="#f0f0f0">Return Value</text>
<path d="M2175.9 1653.1 L2181.1 1657.1 L2175.9 1661.1 Z" fill="#5a00b8"/>
<circle cx="2168.5" cy="1657.1" r="7.2" fill="#5a00b8"/>
<rect x="2237.1" y="1731.4" width="303.7" height="16" rx="8" fill="rgba(0,0,0,0.45)" filter="url(#blur4)"/>
<rect x="2234.1" y="1670" width="309.7" height="72.4" rx="15" fill="rgba(44,44,44,0.6)" stroke="#0e0e0e" stroke-width="2"/>
<rect x="2235.1" y="1671" width="307.7" height="70.4" rx="14" fill="url(#lg92)"/>
<path d="M2262.2 1682.5 L2267.4 1686.5 L2262.2 1690.5 Z" fill="#5a00b8"/>
<circle cx="2254.8" cy="1686.5" r="7.2" fill="#5a00b8"/>
<path d="M2262.2 1716.7 L2267.4 1720.7 L2262.2 1724.7 Z" fill="#5a00b8"/>
<circle cx="2254.8" cy="1720.7" r="5.9" fill="#303030" stroke="#5a00b8" stroke-width="2.6"/>
<rect x="2373.6" y="1699.8" width="12.9" height="3.2" fill="#e0e0e0"/>
<rect x="2373.6" y="1707.8" width="12.9" height="3.2" fill="#e0e0e0"/>
<rect x="2392" y="1699.8" width="13" height="3.2" fill="#e0e0e0"/>
<rect x="2392" y="1707.8" width="13" height="3.2" fill="#e0e0e0"/>
<rect x="2284.5" y="1711" width="129.3" height="20.2" rx="3" fill="#5a5a5a"/>
<text x="2287.2" y="1727" font-family="Liberation Sans" font-size="14.5" textLength="108.3" lengthAdjust="spacingAndGlyphs" fill="#111">BP Weapon Inven</text>
<text x="2286.2" y="1726" font-family="Liberation Sans" font-size="14.5" textLength="108.3" lengthAdjust="spacingAndGlyphs" fill="#e8e8e8">BP Weapon Inven</text>
<path d="M2398 1718H2410L2404 1725Z" fill="#dcdcdc"/>
<path d="M2420 1720L2427 1714V1717.5H2434V1722.5H2427V1726Z" fill="#6a6a6a"/>
<circle cx="2449" cy="1718" r="5" fill="none" stroke="#6a6a6a" stroke-width="2"/><path d="M2445.5 1722L2441 1727" stroke="#6a6a6a" stroke-width="2.2"/>
<path d="M2523.5 1701 L2528.7 1705 L2523.5 1709 Z" fill="#a80000"/>
<circle cx="2516.1" cy="1705" r="7.2" fill="#a80000"/>
<g opacity="0.17"><text x="2973" y="1845" font-family="Liberation Sans" font-weight="bold" font-size="95" fill="#ffffff" stroke="#ffffff" stroke-width="2.6" stroke-linejoin="round" textLength="432" lengthAdjust="spacingAndGlyphs">BLUEPRINT</text></g>
<rect x="0" y="1780" width="3426" height="99" fill="url(#lg93)"/>
<rect x="3370" y="0" width="56" height="1879" fill="url(#lg94)"/>
<rect x="0" y="0" width="3426" height="60.5" fill="rgba(0,0,0,0.55)"/>
<path d="M29 16 L32.64 24.98 L42.31 25.67 L34.9 31.92 L37.23 41.33 L29 36.2 L20.77 41.33 L23.1 31.92 L15.69 25.67 L25.36 24.98 Z" fill="none" stroke="#d0d0d0" stroke-width="1.8" stroke-linejoin="miter"/>
<rect x="53" y="3" width="1.2" height="54" fill="#7a7a7a"/>
<rect x="184" y="3" width="1.2" height="54" fill="#7a7a7a"/>
<path d="M74 38 L90 52 L98 44 Z" fill="rgba(0,0,0,0.7)"/>
<path d="M72.5 28 L87.5 11 V21 H96.5 V38.5 H87.5 V44.5 Z" fill="url(#lg95)"/>
<path d="M137 43 L145 38 L162 41 Z" fill="rgba(0,0,0,0.3)"/>
<path d="M161.5 28 L146.5 11 V21 H135.5 V36.5 H146.5 V44.5 Z" fill="#8c8c8c"/>
<path d="M215 22H226M215 22V33M231 24V32" stroke="#9aa6e0" stroke-width="1.2"/>
<rect x="210" y="14" width="10.5" height="8.5" fill="url(#lg96)"/>
<rect x="224.5" y="14.5" width="12.5" height="9.5" fill="url(#lg96)"/>
<rect x="201" y="29" width="19.5" height="13" fill="url(#lg96)"/>
<rect x="224.5" y="29.5" width="12.5" height="8.5" fill="url(#lg96)"/>
<text x="258.5" y="40" font-family="Liberation Sans" font-size="29.3" textLength="253.2" lengthAdjust="spacingAndGlyphs" fill="#9c9c9c">BP_MasterInventory</text>
<text x="552.5" y="40" font-family="Liberation Sans" font-size="29.3" textLength="150.5" lengthAdjust="spacingAndGlyphs" fill="#9c9c9c">Event Graph</text>
<text x="780.7" y="40" font-family="Liberation Sans" font-size="29.3" textLength="131.8" lengthAdjust="spacingAndGlyphs" fill="#9c9c9c">Begin Play</text>
<path d="M525 21 L536 30 L525 39" fill="none" stroke="#e6e6e6" stroke-width="2.6"/>
<path d="M739.6 21 L750.6 30 L739.6 39" fill="none" stroke="#e6e6e6" stroke-width="2.6"/>
<text x="3311.8" y="35" font-family="Liberation Sans" font-size="31" font-weight="bold" textLength="101.2" lengthAdjust="spacingAndGlyphs" fill="#2f2f2f">Zoom -1</text>
<rect x="0" y="0" width="3" height="1879" fill="#3a3a3a"/>
<rect x="3424" y="0" width="2" height="1879" fill="#3a3a3a"/></svg>
</body></html>
